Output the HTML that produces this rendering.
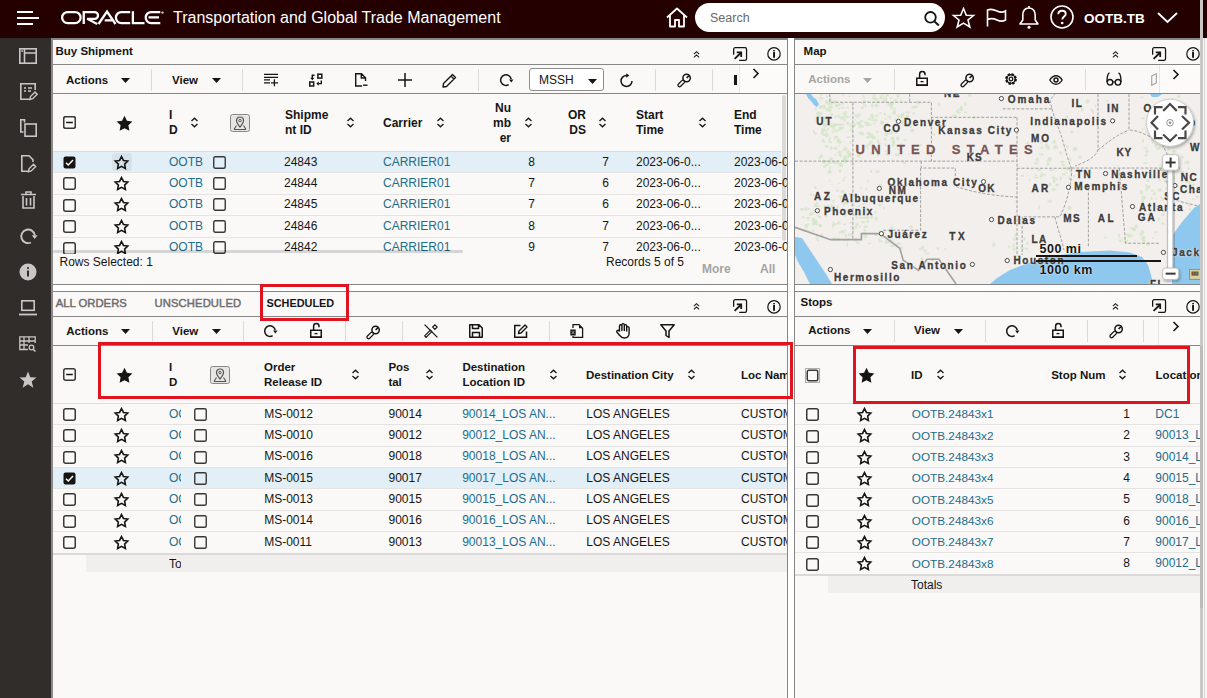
<!DOCTYPE html><html><head><meta charset="utf-8"><style>
html,body{margin:0;padding:0;}
body{width:1207px;height:698px;overflow:hidden;position:relative;background:#ffffff;font-family:"Liberation Sans", sans-serif;}
.t{position:absolute;white-space:nowrap;}
.r{position:absolute;}
.s{position:absolute;overflow:visible;}
</style></head><body>
<div class="r" style="left:0px;top:0px;width:1207px;height:38px;background:#250000;"></div>
<div class="r" style="left:17px;top:11px;width:16px;height:2px;background:#fff;"></div>
<div class="r" style="left:17px;top:17px;width:22px;height:2px;background:#fff;"></div>
<div class="r" style="left:17px;top:23px;width:16px;height:2px;background:#fff;"></div>
<svg class="s" style="left:58px;top:8px;" width="110" height="20" viewBox="0 0 110 20"><g fill="none" stroke="#fff" stroke-width="2.3">
<rect x="4.1" y="4.05" width="18.5" height="11" rx="5.5"/>
<path d="M25.75 16 V4.05 H36.6 A3.4 3.4 0 0 1 36.6 10.85 H29.2 L39.2 16" stroke-linejoin="miter"/>
<path d="M40.5 16 L49 3.5 L57.5 16 M46.7 12.3 H54"/>
<path d="M72.2 4.05 H63.4 A5.5 5.5 0 0 0 63.4 15.05 H72.2"/>
<path d="M74.9 3.2 V15.05 H86.5"/>
<path d="M102.3 4.05 H93.2 A5.5 5.5 0 0 0 93.2 15.05 H102.3 M90.5 9.4 H101"/>
</g><circle cx="104.5" cy="4.6" r="1.2" fill="#ccc"/></svg>
<div class="t" style="left:173px;top:10.26px;font-size:16px;line-height:16px;font-weight:400;color:#fff;">Transportation and Global Trade Management</div>
<svg class="s" style="left:665px;top:7px;" width="24" height="21" viewBox="0 0 24 21"><path d="M2 10.5 L12 1.5 L22 10.5 M5 8 V19.5 H10 V13 H14 V19.5 H19 V8" stroke="#fff" stroke-width="1.8" fill="none" stroke-linejoin="round"/></svg>
<div class="r" style="left:695px;top:3px;width:250px;height:29px;background:#fff;border-radius:15px;"></div>
<div class="t" style="left:710px;top:12.32px;font-size:12.5px;line-height:12.5px;font-weight:400;color:#6b6967;">Search</div>
<svg class="s" style="left:924px;top:11px;" width="16" height="15" viewBox="0 0 16 15"><circle cx="6.5" cy="6.3" r="5.3" stroke="#161513" stroke-width="1.8" fill="none"/><path d="M10.3 10.2 L14.8 14.5" stroke="#161513" stroke-width="2" /></svg>
<svg class="s" style="left:952px;top:7px;" width="23" height="21" viewBox="0 0 23 21"><polygon points="11.5,1.5 14.3,8.2 21.5,8.5 16,13 17.8,20 11.5,16.1 5.2,20 7,13 1.5,8.5 8.7,8.2" fill="none" stroke="#fff" stroke-width="1.6" stroke-linejoin="miter"/></svg>
<svg class="s" style="left:986px;top:8px;" width="21" height="19" viewBox="0 0 21 19"><path d="M1.5 18.5 V2 C5 0.5 8 1.5 11 3 C14 4.5 17 4.5 19.5 3 V12 C17 13.5 14 13.5 11 12 C8 10.5 5 10 1.5 11.5" stroke="#fff" stroke-width="1.6" fill="none"/></svg>
<svg class="s" style="left:1018px;top:5px;" width="22" height="24" viewBox="0 0 22 24"><path d="M11 3 C6.5 3 4.8 6.5 4.8 10.5 V15 L2 19 H20 L17.2 15 V10.5 C17.2 6.5 15.5 3 11 3 Z M11 1 V3" stroke="#fff" stroke-width="1.6" fill="none" stroke-linejoin="round"/><circle cx="11" cy="22.3" r="1.5" fill="#fff"/></svg>
<svg class="s" style="left:1050px;top:5px;" width="24" height="24" viewBox="0 0 24 24"><circle cx="12" cy="12" r="11" stroke="#fff" stroke-width="1.6" fill="none"/><path d="M8.3 9.3 C8.3 6.8 10 5.7 12 5.7 C14.2 5.7 15.7 7 15.7 8.9 C15.7 11.5 12.3 11.7 12.3 14.5" stroke="#fff" stroke-width="1.9" fill="none"/><circle cx="12.2" cy="18" r="1.3" fill="#fff"/></svg>
<div class="t" style="left:1084px;top:11.87px;font-size:13.5px;line-height:13.5px;font-weight:700;color:#fff;">OOTB.TB</div>
<svg class="s" style="left:1157px;top:12px;" width="21" height="11" viewBox="0 0 21 11"><path d="M1 1 L10.5 10 L20 1" stroke="#fff" stroke-width="1.8" fill="none"/></svg>
<div class="r" style="left:0px;top:38px;width:51px;height:660px;background:#312d2a;"></div>
<div class="r" style="left:51px;top:38px;width:2px;height:660px;background:#8c8a88;"></div>
<svg class="s" style="left:19px;top:48px;" width="18" height="16" viewBox="0 0 18 16"><rect x="0.8" y="0.8" width="16.4" height="14.4" fill="none" stroke="#c9c7c5" stroke-width="1.6"/><path d="M5.5 0.8 V15.2 M5.5 5 H17.2" stroke="#c9c7c5" stroke-width="1.6"/><circle cx="3.1" cy="3" r="0.9" fill="#c9c7c5"/></svg>
<svg class="s" style="left:20px;top:83px;" width="18" height="18" viewBox="0 0 18 18"><path d="M10 16.2 H0.8 V0.8 H15.2 V7" stroke="#c9c7c5" stroke-width="1.6" fill="none"/><path d="M4 5 H6 M8 5 H12 M4 8 H6 M8 8 H11" stroke="#c9c7c5" stroke-width="1.6"/><path d="M10 16.5 L10.5 13.5 L15 9 L17.2 11.2 L12.7 15.7 Z" stroke="#c9c7c5" stroke-width="1.4" fill="none"/></svg>
<svg class="s" style="left:20px;top:119px;" width="17" height="18" viewBox="0 0 17 18"><path d="M4.5 3.5 V0.8 H0.8 V13 H3.5" stroke="#c9c7c5" stroke-width="1.6" fill="none"/><rect x="5" y="5" width="11.2" height="12.2" stroke="#c9c7c5" stroke-width="1.6" fill="none"/></svg>
<svg class="s" style="left:21px;top:155px;" width="17" height="18" viewBox="0 0 17 18"><path d="M7 16.2 H0.8 V0.8 H8 L12 4.8 V7" stroke="#c9c7c5" stroke-width="1.6" fill="none"/><path d="M7.5 16.8 L8 13.8 L12.5 9.3 L14.7 11.5 L10.2 16 Z" stroke="#c9c7c5" stroke-width="1.4" fill="none"/></svg>
<svg class="s" style="left:21px;top:191px;" width="15" height="18" viewBox="0 0 15 18"><path d="M0 3.5 H15 M5 3.5 V1 H10 V3.5 M2 5 V17 H13 V5 M5.5 7 V14.5 M9.5 7 V14.5" stroke="#c9c7c5" stroke-width="1.6" fill="none"/></svg>
<svg class="s" style="left:20px;top:228px;" width="18" height="17" viewBox="0 0 18 17"><path d="M10.9 14.5 A6.8 6.8 0 1 1 14.8 7.2" stroke="#c9c7c5" stroke-width="1.9" fill="none"/><path d="M11.8 7.2 H17.6 L14.7 11 Z" fill="#c9c7c5"/></svg>
<svg class="s" style="left:19px;top:263px;" width="18" height="18" viewBox="0 0 18 18"><circle cx="9" cy="9" r="8.5" fill="#c9c7c5"/><rect x="8" y="7.5" width="2" height="6" fill="#312d2a"/><circle cx="9" cy="5" r="1.1" fill="#312d2a"/></svg>
<svg class="s" style="left:19px;top:300px;" width="18" height="16" viewBox="0 0 18 16"><rect x="2.8" y="0.8" width="12.4" height="9.5" fill="none" stroke="#c9c7c5" stroke-width="1.6"/><path d="M0 14.5 H18" stroke="#c9c7c5" stroke-width="1.8"/></svg>
<svg class="s" style="left:19px;top:336px;" width="18" height="16" viewBox="0 0 18 16"><path d="M9 13.5 H0.8 V0.8 H16.2 V7 M0.8 5 H16 M0.8 9 H9 M5 0.8 V13.5 M10 0.8 V7" stroke="#c9c7c5" stroke-width="1.3" fill="none"/><circle cx="12.5" cy="11.5" r="2.3" stroke="#c9c7c5" stroke-width="1.3" fill="none"/><path d="M14.2 13.2 L16.5 15.5" stroke="#c9c7c5" stroke-width="1.5"/></svg>
<svg class="s" style="left:19px;top:371px;" width="18" height="18" viewBox="0 0 18 18"><polygon points="9,0.5 11.3,6.3 17.5,6.6 12.7,10.5 14.3,16.8 9,13.3 3.7,16.8 5.3,10.5 0.5,6.6 6.7,6.3" fill="#c9c7c5"/></svg>
<div class="r" style="left:53px;top:38px;width:735px;height:2px;background:#868686;"></div>
<div class="r" style="left:53px;top:40px;width:734px;height:244px;background:#faf9f8;"></div>
<div class="r" style="left:787px;top:38px;width:1px;height:247px;background:#868686;"></div>
<div class="r" style="left:53px;top:63.5px;width:734px;height:1.5px;background:#868686;"></div>
<div class="r" style="left:53px;top:93px;width:734px;height:1.2px;background:#868686;"></div>
<div class="t" style="left:55.5px;top:45.97px;font-size:11.5px;line-height:11.5px;font-weight:700;color:#161513;">Buy Shipment</div>
<svg class="s" style="left:693px;top:50.5px;" width="7" height="7" viewBox="0 0 7 7"><path d="M0.9 3.2 L3.5 0.7 L6.1 3.2 M0.9 6.4 L3.5 3.9 L6.1 6.4" stroke="#161513" stroke-width="1.05" fill="none"/></svg>
<svg class="s" style="left:733px;top:47px;" width="14" height="14" viewBox="0 0 14 14"><path d="M0.65 7.7 V2.2 A1.55 1.55 0 0 1 2.2 0.65 H12 A1.55 1.55 0 0 1 13.55 2.2 V11.8 A1.55 1.55 0 0 1 12 13.35 H6.2" stroke="#161513" stroke-width="1.3" fill="none"/><path d="M1.6 11.9 L8.2 5.5" stroke="#161513" stroke-width="1.8"/><path d="M3.8 5.4 H8.2 V10" stroke="#161513" stroke-width="1.8" fill="none"/></svg>
<svg class="s" style="left:767px;top:46px;" width="15" height="15" viewBox="0 0 15 15"><circle cx="7" cy="7.9" r="6.2" stroke="#161513" stroke-width="1.2" fill="none"/><rect x="6.1" y="6" width="1.9" height="5.8" fill="#161513"/><rect x="6.1" y="4.1" width="1.9" height="1.2" fill="#161513"/></svg>
<div class="t" style="left:66px;top:74.77px;font-size:11.5px;line-height:11.5px;font-weight:700;color:#161513;">Actions</div>
<svg class="s" style="left:121px;top:78px;" width="9" height="5" viewBox="0 0 9 5"><path d="M0 0 H9 L4.5 5 Z" fill="#161513"/></svg>
<div class="r" style="left:151px;top:69px;width:1px;height:22px;background:#dcdad8;"></div>
<div class="t" style="left:172px;top:74.77px;font-size:11.5px;line-height:11.5px;font-weight:700;color:#161513;">View</div>
<svg class="s" style="left:212px;top:78px;" width="9" height="5" viewBox="0 0 9 5"><path d="M0 0 H9 L4.5 5 Z" fill="#161513"/></svg>
<div class="r" style="left:242px;top:69px;width:1px;height:22px;background:#dcdad8;"></div>
<svg class="s" style="left:264px;top:73px;" width="15" height="14" viewBox="0 0 15 14"><path d="M0 1.4 H14 M0 4.3 H14 M0 6.9 H6 M0 9.8 H6 M7 9.8 H14 M10.4 6.3 V13.3" stroke="#161513" stroke-width="1.3"/></svg>
<svg class="s" style="left:309px;top:73px;" width="14" height="14" viewBox="0 0 14 14"><rect x="8.9" y="1.2" width="3.9" height="3.9" fill="none" stroke="#161513" stroke-width="1.5"/><rect x="0.75" y="9" width="3.9" height="4" fill="none" stroke="#161513" stroke-width="1.5"/><path d="M5.5 2.2 H3.3 V5.2" stroke="#161513" stroke-width="1.4" fill="none"/><path d="M1.2 4.8 H5.4 L3.3 7.3 Z" fill="#161513"/><path d="M12.3 7.6 V10.6 H9.5" stroke="#161513" stroke-width="1.4" fill="none"/><path d="M9.8 8.4 V12.8 L7.3 10.6 Z" fill="#161513"/></svg>
<svg class="s" style="left:355px;top:73px;" width="13" height="14" viewBox="0 0 13 14"><path d="M7 13 H0.7 V0.7 H6.5 L10.5 4.7 V8 M6.3 0.7 V5 H10.5" stroke="#161513" stroke-width="1.4" fill="none"/><path d="M8 12.2 H12.5" stroke="#161513" stroke-width="1.4"/></svg>
<svg class="s" style="left:398px;top:73px;" width="14" height="14" viewBox="0 0 14 14"><path d="M7 0 V14 M0 7 H14" stroke="#161513" stroke-width="1.5"/></svg>
<svg class="s" style="left:442px;top:73px;" width="15" height="15" viewBox="0 0 15 15"><path d="M1 14 L1.5 10.5 L10.5 1.5 L13.5 4.5 L4.5 13.5 Z M9 3 L12 6" stroke="#161513" stroke-width="1.4" fill="none" stroke-linejoin="round"/></svg>
<div class="r" style="left:478px;top:69px;width:1px;height:22px;background:#dcdad8;"></div>
<svg class="s" style="left:500px;top:74px;" width="14" height="13" viewBox="0 0 14 13"><path d="M8.65 10.7 A5.3 5.3 0 1 1 11.2 5.2" stroke="#161513" stroke-width="1.5" fill="none"/><path d="M9.1 5.4 H13.5 L11.3 8.4 Z" fill="#161513"/></svg>
<div class="r" style="left:529px;top:68px;width:75px;height:23px;background:#fff;border:1px solid #8f8d8b;border-radius:3px;box-sizing:border-box;"></div>
<div class="t" style="left:539px;top:74.34px;font-size:12px;line-height:12px;font-weight:400;color:#161513;">MSSH</div>
<svg class="s" style="left:587.5px;top:78.5px;" width="9" height="5" viewBox="0 0 9 5"><path d="M0 0 H9 L4.5 5 Z" fill="#161513"/></svg>
<svg class="s" style="left:619px;top:73px;" width="15" height="15" viewBox="0 0 15 15"><path d="M7.5 2.5 A5.5 5.5 0 1 0 13 8" stroke="#161513" stroke-width="1.5" fill="none"/><path d="M7.2 0.2 L10.4 2.5 L7.2 4.8 Z" fill="#161513"/></svg>
<div class="r" style="left:655px;top:69px;width:1px;height:22px;background:#dcdad8;"></div>
<svg class="s" style="left:677px;top:73px;" width="15" height="14" viewBox="0 0 15 14"><circle cx="9.6" cy="5" r="3.7" stroke="#161513" stroke-width="1.5" fill="none"/><path d="M9.6 5 L12 2.6" stroke="#161513" stroke-width="1.6"/><g transform="translate(7.1 7.6) rotate(45)"><rect x="-1.6" y="0" width="3.2" height="8" rx="1.6" fill="none" stroke="#161513" stroke-width="1.3"/></g></svg>
<div class="r" style="left:712px;top:69px;width:1px;height:22px;background:#dcdad8;"></div>
<div class="r" style="left:734px;top:75px;width:3px;height:10px;background:#161513;"></div>
<div class="r" style="left:739px;top:65px;width:48px;height:28px;background:#fcfbfa;"></div>
<div class="r" style="left:739px;top:65px;width:1px;height:28px;background:#e8e6e4;"></div>
<svg class="s" style="left:752px;top:68px;" width="8" height="11" viewBox="0 0 8 11"><path d="M1.5 1 L6 5.5 L1.5 10" stroke="#161513" stroke-width="1.6" fill="none"/></svg>
<svg class="s" style="left:63px;top:116px;" width="13" height="13" viewBox="0 0 13 13"><rect x="0.75" y="0.75" width="11.5" height="11.5" rx="2" fill="none" stroke="#3a3836" stroke-width="1.5"/></svg>
<svg class="s" style="left:63px;top:116px;" width="13" height="13" viewBox="0 0 13 13"><rect x="0.75" y="0.75" width="11.5" height="11.5" rx="2" fill="#faf9f8" stroke="#3a3836" stroke-width="1.5"/><path d="M3.2 6.5 H9.8" stroke="#161513" stroke-width="1.5"/></svg>
<svg class="s" style="left:116.5px;top:115.5px;" width="15" height="15" viewBox="0 0 15 15"><polygon points="7.50,-0.20 9.91,4.78 15.39,5.54 11.40,9.37 12.38,14.81 7.50,12.20 2.62,14.81 3.60,9.37 -0.39,5.54 5.09,4.78" fill="#161513"/></svg>
<div class="t" style="left:169px;top:109.34px;font-size:12px;line-height:12px;font-weight:700;color:#161513;">I</div>
<div class="t" style="left:169px;top:124.34px;font-size:12px;line-height:12px;font-weight:700;color:#161513;">D</div>
<svg class="s" style="left:190px;top:117px;" width="9" height="11" viewBox="0 0 9 11"><path d="M1.5 4 L4.5 1.2 L7.5 4 M1.5 7 L4.5 9.8 L7.5 7" stroke="#161513" stroke-width="1.3" fill="none"/></svg>
<svg class="s" style="left:230px;top:114px;" width="20" height="18" viewBox="0 0 20 18"><rect x="0.5" y="0.5" width="19" height="17" rx="2" fill="#e8e6e4" stroke="#8a8886"/><path d="M10 13 C7 9.5 6.5 8 6.5 6.5 A3.5 3.5 0 0 1 13.5 6.5 C13.5 8 13 9.5 10 13 Z" fill="none" stroke="#555" stroke-width="1.2"/><circle cx="10" cy="6.6" r="1.2" fill="none" stroke="#555" stroke-width="1"/><path d="M4 15.5 L6.5 11.5 M16 15.5 L13.5 11.5 M4 15.5 H16" stroke="#555" stroke-width="1.1" fill="none"/></svg>
<div class="t" style="left:285px;top:109.34px;font-size:12px;line-height:12px;font-weight:700;color:#161513;">Shipme</div>
<div class="t" style="left:285px;top:124.34px;font-size:12px;line-height:12px;font-weight:700;color:#161513;">nt ID</div>
<svg class="s" style="left:346px;top:117px;" width="9" height="11" viewBox="0 0 9 11"><path d="M1.5 4 L4.5 1.2 L7.5 4 M1.5 7 L4.5 9.8 L7.5 7" stroke="#161513" stroke-width="1.3" fill="none"/></svg>
<div class="t" style="left:383px;top:117.34px;font-size:12px;line-height:12px;font-weight:700;color:#161513;">Carrier</div>
<svg class="s" style="left:436px;top:117px;" width="9" height="11" viewBox="0 0 9 11"><path d="M1.5 4 L4.5 1.2 L7.5 4 M1.5 7 L4.5 9.8 L7.5 7" stroke="#161513" stroke-width="1.3" fill="none"/></svg>
<div class="t" style="right:696px;top:101.84px;font-size:12px;line-height:12px;font-weight:700;color:#161513;">Nu</div>
<div class="t" style="right:696px;top:117.34px;font-size:12px;line-height:12px;font-weight:700;color:#161513;">mb</div>
<div class="t" style="right:696px;top:132.34px;font-size:12px;line-height:12px;font-weight:700;color:#161513;">er</div>
<svg class="s" style="left:524px;top:117px;" width="9" height="11" viewBox="0 0 9 11"><path d="M1.5 4 L4.5 1.2 L7.5 4 M1.5 7 L4.5 9.8 L7.5 7" stroke="#161513" stroke-width="1.3" fill="none"/></svg>
<div class="t" style="right:621px;top:109.34px;font-size:12px;line-height:12px;font-weight:700;color:#161513;">OR</div>
<div class="t" style="right:621px;top:124.34px;font-size:12px;line-height:12px;font-weight:700;color:#161513;">DS</div>
<svg class="s" style="left:598px;top:117px;" width="9" height="11" viewBox="0 0 9 11"><path d="M1.5 4 L4.5 1.2 L7.5 4 M1.5 7 L4.5 9.8 L7.5 7" stroke="#161513" stroke-width="1.3" fill="none"/></svg>
<div class="t" style="left:636px;top:109.34px;font-size:12px;line-height:12px;font-weight:700;color:#161513;">Start</div>
<div class="t" style="left:636px;top:124.34px;font-size:12px;line-height:12px;font-weight:700;color:#161513;">Time</div>
<svg class="s" style="left:698px;top:117px;" width="9" height="11" viewBox="0 0 9 11"><path d="M1.5 4 L4.5 1.2 L7.5 4 M1.5 7 L4.5 9.8 L7.5 7" stroke="#161513" stroke-width="1.3" fill="none"/></svg>
<div class="t" style="left:734px;top:109.34px;font-size:12px;line-height:12px;font-weight:700;color:#161513;">End</div>
<div class="t" style="left:734px;top:124.34px;font-size:12px;line-height:12px;font-weight:700;color:#161513;">Time</div>
<div class="r" style="left:53px;top:150.5px;width:728px;height:1px;background:#dedcda;"></div>
<div class="r" style="left:53px;top:151.5px;width:728px;height:21.0px;background:#e3eff6;"></div>
<div class="r" style="left:112px;top:153px;width:20px;height:18px;background:#d7e3ea;border-radius:3px;"></div>
<div class="r" style="left:53px;top:172.0px;width:728px;height:1px;background:#e6e4e2;"></div>
<svg class="s" style="left:63px;top:156.0px;" width="13" height="13" viewBox="0 0 13 13"><rect x="0.5" y="0.5" width="12" height="12" rx="2" fill="#161513"/><path d="M3 6.8 L5.3 9 L10 4" stroke="#fff" stroke-width="1.5" fill="none"/></svg>
<svg class="s" style="left:114.2px;top:154.5px;" width="15" height="15" viewBox="0 0 15 15"><polygon points="7.50,1.50 9.44,5.43 13.78,6.06 10.64,9.12 11.38,13.44 7.50,11.40 3.62,13.44 4.36,9.12 1.22,6.06 5.56,5.43" fill="none" stroke="#161513" stroke-width="1.6" stroke-linejoin="miter"/></svg>
<div class="t" style="left:169px;top:155.94px;font-size:12px;line-height:12px;font-weight:400;color:#1c6d8c;">OOTB</div>
<svg class="s" style="left:213px;top:155.5px;" width="13" height="13" viewBox="0 0 13 13"><rect x="0.75" y="0.75" width="11.5" height="11.5" rx="1.5" fill="none" stroke="#3a3836" stroke-width="1.4"/></svg>
<div class="t" style="left:284px;top:155.94px;font-size:12px;line-height:12px;font-weight:400;color:#161513;">24843</div>
<div class="t" style="left:383px;top:155.94px;font-size:12px;line-height:12px;font-weight:400;color:#1c6d8c;">CARRIER01</div>
<div class="t" style="right:672px;top:155.94px;font-size:12px;line-height:12px;font-weight:400;color:#161513;">8</div>
<div class="t" style="right:598px;top:155.94px;font-size:12px;line-height:12px;font-weight:400;color:#161513;">7</div>
<div class="t" style="left:636px;top:155.94px;font-size:12px;line-height:12px;font-weight:400;color:#161513;">2023-06-0...</div>
<div class="t" style="left:734px;top:155.94px;font-size:12px;line-height:12px;font-weight:400;color:#161513;">2023-06-0</div>
<div class="r" style="left:53px;top:193.5px;width:728px;height:1px;background:#e6e4e2;"></div>
<svg class="s" style="left:63px;top:177.0px;" width="13" height="13" viewBox="0 0 13 13"><rect x="0.75" y="0.75" width="11.5" height="11.5" rx="2" fill="none" stroke="#3a3836" stroke-width="1.5"/></svg>
<svg class="s" style="left:114.2px;top:175.5px;" width="15" height="15" viewBox="0 0 15 15"><polygon points="7.50,1.50 9.44,5.43 13.78,6.06 10.64,9.12 11.38,13.44 7.50,11.40 3.62,13.44 4.36,9.12 1.22,6.06 5.56,5.43" fill="none" stroke="#161513" stroke-width="1.6" stroke-linejoin="miter"/></svg>
<div class="t" style="left:169px;top:176.94px;font-size:12px;line-height:12px;font-weight:400;color:#1c6d8c;">OOTB</div>
<svg class="s" style="left:213px;top:176.5px;" width="13" height="13" viewBox="0 0 13 13"><rect x="0.75" y="0.75" width="11.5" height="11.5" rx="1.5" fill="none" stroke="#3a3836" stroke-width="1.4"/></svg>
<div class="t" style="left:284px;top:176.94px;font-size:12px;line-height:12px;font-weight:400;color:#161513;">24844</div>
<div class="t" style="left:383px;top:176.94px;font-size:12px;line-height:12px;font-weight:400;color:#1c6d8c;">CARRIER01</div>
<div class="t" style="right:672px;top:176.94px;font-size:12px;line-height:12px;font-weight:400;color:#161513;">7</div>
<div class="t" style="right:598px;top:176.94px;font-size:12px;line-height:12px;font-weight:400;color:#161513;">6</div>
<div class="t" style="left:636px;top:176.94px;font-size:12px;line-height:12px;font-weight:400;color:#161513;">2023-06-0...</div>
<div class="t" style="left:734px;top:176.94px;font-size:12px;line-height:12px;font-weight:400;color:#161513;">2023-06-0</div>
<div class="r" style="left:53px;top:215.0px;width:728px;height:1px;background:#e6e4e2;"></div>
<svg class="s" style="left:63px;top:198.5px;" width="13" height="13" viewBox="0 0 13 13"><rect x="0.75" y="0.75" width="11.5" height="11.5" rx="2" fill="none" stroke="#3a3836" stroke-width="1.5"/></svg>
<svg class="s" style="left:114.2px;top:197px;" width="15" height="15" viewBox="0 0 15 15"><polygon points="7.50,1.50 9.44,5.43 13.78,6.06 10.64,9.12 11.38,13.44 7.50,11.40 3.62,13.44 4.36,9.12 1.22,6.06 5.56,5.43" fill="none" stroke="#161513" stroke-width="1.6" stroke-linejoin="miter"/></svg>
<div class="t" style="left:169px;top:198.44px;font-size:12px;line-height:12px;font-weight:400;color:#1c6d8c;">OOTB</div>
<svg class="s" style="left:213px;top:198px;" width="13" height="13" viewBox="0 0 13 13"><rect x="0.75" y="0.75" width="11.5" height="11.5" rx="1.5" fill="none" stroke="#3a3836" stroke-width="1.4"/></svg>
<div class="t" style="left:284px;top:198.44px;font-size:12px;line-height:12px;font-weight:400;color:#161513;">24845</div>
<div class="t" style="left:383px;top:198.44px;font-size:12px;line-height:12px;font-weight:400;color:#1c6d8c;">CARRIER01</div>
<div class="t" style="right:672px;top:198.44px;font-size:12px;line-height:12px;font-weight:400;color:#161513;">7</div>
<div class="t" style="right:598px;top:198.44px;font-size:12px;line-height:12px;font-weight:400;color:#161513;">6</div>
<div class="t" style="left:636px;top:198.44px;font-size:12px;line-height:12px;font-weight:400;color:#161513;">2023-06-0...</div>
<div class="t" style="left:734px;top:198.44px;font-size:12px;line-height:12px;font-weight:400;color:#161513;">2023-06-0</div>
<div class="r" style="left:53px;top:236.5px;width:728px;height:1px;background:#e6e4e2;"></div>
<svg class="s" style="left:63px;top:220.0px;" width="13" height="13" viewBox="0 0 13 13"><rect x="0.75" y="0.75" width="11.5" height="11.5" rx="2" fill="none" stroke="#3a3836" stroke-width="1.5"/></svg>
<svg class="s" style="left:114.2px;top:218.5px;" width="15" height="15" viewBox="0 0 15 15"><polygon points="7.50,1.50 9.44,5.43 13.78,6.06 10.64,9.12 11.38,13.44 7.50,11.40 3.62,13.44 4.36,9.12 1.22,6.06 5.56,5.43" fill="none" stroke="#161513" stroke-width="1.6" stroke-linejoin="miter"/></svg>
<div class="t" style="left:169px;top:219.94px;font-size:12px;line-height:12px;font-weight:400;color:#1c6d8c;">OOTB</div>
<svg class="s" style="left:213px;top:219.5px;" width="13" height="13" viewBox="0 0 13 13"><rect x="0.75" y="0.75" width="11.5" height="11.5" rx="1.5" fill="none" stroke="#3a3836" stroke-width="1.4"/></svg>
<div class="t" style="left:284px;top:219.94px;font-size:12px;line-height:12px;font-weight:400;color:#161513;">24846</div>
<div class="t" style="left:383px;top:219.94px;font-size:12px;line-height:12px;font-weight:400;color:#1c6d8c;">CARRIER01</div>
<div class="t" style="right:672px;top:219.94px;font-size:12px;line-height:12px;font-weight:400;color:#161513;">8</div>
<div class="t" style="right:598px;top:219.94px;font-size:12px;line-height:12px;font-weight:400;color:#161513;">7</div>
<div class="t" style="left:636px;top:219.94px;font-size:12px;line-height:12px;font-weight:400;color:#161513;">2023-06-0...</div>
<div class="t" style="left:734px;top:219.94px;font-size:12px;line-height:12px;font-weight:400;color:#161513;">2023-06-0</div>
<svg class="s" style="left:63px;top:241.5px;" width="13" height="13" viewBox="0 0 13 13"><rect x="0.75" y="0.75" width="11.5" height="11.5" rx="2" fill="none" stroke="#3a3836" stroke-width="1.5"/></svg>
<svg class="s" style="left:114.2px;top:240px;" width="15" height="15" viewBox="0 0 15 15"><polygon points="7.50,1.50 9.44,5.43 13.78,6.06 10.64,9.12 11.38,13.44 7.50,11.40 3.62,13.44 4.36,9.12 1.22,6.06 5.56,5.43" fill="none" stroke="#161513" stroke-width="1.6" stroke-linejoin="miter"/></svg>
<div class="t" style="left:169px;top:241.44px;font-size:12px;line-height:12px;font-weight:400;color:#1c6d8c;">OOTB</div>
<svg class="s" style="left:213px;top:241px;" width="13" height="13" viewBox="0 0 13 13"><rect x="0.75" y="0.75" width="11.5" height="11.5" rx="1.5" fill="none" stroke="#3a3836" stroke-width="1.4"/></svg>
<div class="t" style="left:284px;top:241.44px;font-size:12px;line-height:12px;font-weight:400;color:#161513;">24842</div>
<div class="t" style="left:383px;top:241.44px;font-size:12px;line-height:12px;font-weight:400;color:#1c6d8c;">CARRIER01</div>
<div class="t" style="right:672px;top:241.44px;font-size:12px;line-height:12px;font-weight:400;color:#161513;">9</div>
<div class="t" style="right:598px;top:241.44px;font-size:12px;line-height:12px;font-weight:400;color:#161513;">7</div>
<div class="t" style="left:636px;top:241.44px;font-size:12px;line-height:12px;font-weight:400;color:#161513;">2023-06-0...</div>
<div class="t" style="left:734px;top:241.44px;font-size:12px;line-height:12px;font-weight:400;color:#161513;">2023-06-0</div>
<div class="r" style="left:53px;top:254px;width:734px;height:30px;background:#faf9f8;"></div>
<div class="r" style="left:53px;top:250px;width:410px;height:3px;background:rgba(0,0,0,0.14);border-radius:1.5px;"></div>
<div class="r" style="left:781.5px;top:94.5px;width:4px;height:146px;background:rgba(0,0,0,0.12);border-radius:2px;"></div>
<div class="r" style="left:53px;top:283.8px;width:735px;height:1.2px;background:#868686;"></div>
<div class="t" style="left:59.5px;top:256.34px;font-size:12px;line-height:12px;font-weight:400;color:#161513;">Rows Selected: 1</div>
<div class="t" style="left:606px;top:256.34px;font-size:12px;line-height:12px;font-weight:400;color:#161513;">Records 5 of 5</div>
<div class="t" style="left:702px;top:262.84px;font-size:12px;line-height:12px;font-weight:700;color:#a6a4a2;">More</div>
<div class="t" style="left:760px;top:262.84px;font-size:12px;line-height:12px;font-weight:700;color:#a6a4a2;">All</div>
<div class="r" style="left:53px;top:290.5px;width:735px;height:1.2px;background:#868686;"></div>
<div class="r" style="left:53px;top:291.7px;width:734px;height:406.3px;background:#faf9f8;"></div>
<div class="r" style="left:787px;top:290.5px;width:1px;height:408px;background:#868686;"></div>
<div class="r" style="left:53px;top:315.8px;width:734px;height:1.2px;background:#868686;"></div>
<div class="r" style="left:53px;top:345px;width:734px;height:1.2px;background:#868686;"></div>
<div class="t" style="left:55.7px;top:297.93px;font-size:11.3px;line-height:11.3px;font-weight:400;color:#6f6d6b;-webkit-text-stroke:0.45px #6f6d6b;">ALL ORDERS</div>
<div class="t" style="left:154.5px;top:298.02px;font-size:11.2px;line-height:11.2px;font-weight:400;color:#6f6d6b;-webkit-text-stroke:0.45px #6f6d6b;letter-spacing:0.15px;">UNSCHEDULED</div>
<div class="t" style="left:266.4px;top:298.27px;font-size:10.9px;line-height:10.9px;font-weight:700;color:#161513;">SCHEDULED</div>
<svg class="s" style="left:692.5px;top:302.5px;" width="7" height="7" viewBox="0 0 7 7"><path d="M0.9 3.2 L3.5 0.7 L6.1 3.2 M0.9 6.4 L3.5 3.9 L6.1 6.4" stroke="#161513" stroke-width="1.05" fill="none"/></svg>
<svg class="s" style="left:733px;top:299.3px;" width="14" height="14" viewBox="0 0 14 14"><path d="M0.65 7.7 V2.2 A1.55 1.55 0 0 1 2.2 0.65 H12 A1.55 1.55 0 0 1 13.55 2.2 V11.8 A1.55 1.55 0 0 1 12 13.35 H6.2" stroke="#161513" stroke-width="1.3" fill="none"/><path d="M1.6 11.9 L8.2 5.5" stroke="#161513" stroke-width="1.8"/><path d="M3.8 5.4 H8.2 V10" stroke="#161513" stroke-width="1.8" fill="none"/></svg>
<svg class="s" style="left:767px;top:298.5px;" width="15" height="15" viewBox="0 0 15 15"><circle cx="7" cy="7.9" r="6.2" stroke="#161513" stroke-width="1.2" fill="none"/><rect x="6.1" y="6" width="1.9" height="5.8" fill="#161513"/><rect x="6.1" y="4.1" width="1.9" height="1.2" fill="#161513"/></svg>
<div class="t" style="left:66.3px;top:325.57px;font-size:11.5px;line-height:11.5px;font-weight:700;color:#161513;">Actions</div>
<svg class="s" style="left:121.4px;top:328.5px;" width="9" height="5" viewBox="0 0 9 5"><path d="M0 0 H9 L4.5 5 Z" fill="#161513"/></svg>
<div class="r" style="left:151.5px;top:321px;width:1px;height:20px;background:#dcdad8;"></div>
<div class="t" style="left:172.3px;top:325.57px;font-size:11.5px;line-height:11.5px;font-weight:700;color:#161513;">View</div>
<svg class="s" style="left:212px;top:328.5px;" width="9" height="5" viewBox="0 0 9 5"><path d="M0 0 H9 L4.5 5 Z" fill="#161513"/></svg>
<div class="r" style="left:242.5px;top:321px;width:1px;height:20px;background:#dcdad8;"></div>
<svg class="s" style="left:264px;top:325px;" width="14" height="13" viewBox="0 0 14 13"><path d="M8.65 10.7 A5.3 5.3 0 1 1 11.2 5.2" stroke="#161513" stroke-width="1.5" fill="none"/><path d="M9.1 5.4 H13.5 L11.3 8.4 Z" fill="#161513"/></svg>
<svg class="s" style="left:309.5px;top:322.5px;" width="12" height="15" viewBox="0 0 12 15"><path d="M3.6 7 V3.3 A2.7 2.7 0 0 1 9 3.3 V4.3" stroke="#161513" stroke-width="1.5" fill="none"/><rect x="0.75" y="7.25" width="10.5" height="7" fill="none" stroke="#161513" stroke-width="1.5"/><path d="M0.75 14 H11.25" stroke="#161513" stroke-width="1.2"/><path d="M4.5 10.6 H7.5" stroke="#161513" stroke-width="1.3"/></svg>
<div class="r" style="left:344.5px;top:321px;width:1px;height:20px;background:#dcdad8;"></div>
<svg class="s" style="left:366px;top:324.5px;" width="15" height="14" viewBox="0 0 15 14"><circle cx="9.6" cy="5" r="3.7" stroke="#161513" stroke-width="1.5" fill="none"/><path d="M9.6 5 L12 2.6" stroke="#161513" stroke-width="1.6"/><g transform="translate(7.1 7.6) rotate(45)"><rect x="-1.6" y="0" width="3.2" height="8" rx="1.6" fill="none" stroke="#161513" stroke-width="1.3"/></g></svg>
<div class="r" style="left:401.5px;top:321px;width:1px;height:20px;background:#dcdad8;"></div>
<svg class="s" style="left:424px;top:324px;" width="14" height="14" viewBox="0 0 14 14"><path d="M0.6 0.6 L13.4 13.4" stroke="#161513" stroke-width="1.3"/><path d="M0.7 11.9 L6.4 6.2 L7.8 7.6 L2.1 13.3 Z" stroke="#161513" stroke-width="1.2" fill="none" stroke-linejoin="round"/><path d="M10.9 0.9 L13.1 3.1 L10.9 5.3 L8.7 3.1 Z" stroke="#161513" stroke-width="1.2" fill="none"/></svg>
<svg class="s" style="left:469px;top:324px;" width="14" height="14" viewBox="0 0 14 14"><path d="M0.75 0.75 H10 L13.25 4 V13.25 H0.75 Z M3.5 0.75 V4.5 H9.5 V0.75 M3.5 13.25 V8.5 H10.5 V13.25" stroke="#161513" stroke-width="1.5" fill="none" stroke-linejoin="round"/></svg>
<svg class="s" style="left:514px;top:324px;" width="14" height="14" viewBox="0 0 14 14"><path d="M6.5 1.5 H0.75 V13.25 H12.5 V7.5" stroke="#161513" stroke-width="1.5" fill="none"/><path d="M4.5 9.5 L5 7 L11 1 L13 3 L7 9 Z" stroke="#161513" stroke-width="1.4" fill="none" stroke-linejoin="round"/></svg>
<div class="r" style="left:548.5px;top:321px;width:1px;height:20px;background:#dcdad8;"></div>
<svg class="s" style="left:570px;top:324px;" width="14" height="14" viewBox="0 0 14 14"><path d="M3 4 V0.65 H9 L12.6 4.3 V13.35 H3 V12" stroke="#161513" stroke-width="1.3" fill="none"/><path d="M9 0.65 L12.6 4.3 H9 Z" fill="#161513"/><rect x="0.3" y="5.5" width="5.4" height="6" fill="#161513"/><path d="M1.6 6.9 L4.4 10.1 M4.4 6.9 L1.6 10.1" stroke="#9ab" stroke-width="0.9"/></svg>
<svg class="s" style="left:616px;top:323px;" width="15" height="16" viewBox="0 0 15 16"><path d="M3.5 8.5 V3 A1.2 1.2 0 0 1 5.9 3 V7.5 V1.8 A1.2 1.2 0 0 1 8.3 1.8 V7.5 V2.8 A1.2 1.2 0 0 1 10.7 2.8 V8 V4.8 A1.2 1.2 0 0 1 13.1 4.8 V10 C13.1 13 11.3 15 8.3 15 C6 15 5 14 3.5 12.2 L1 9.3 A1.2 1.2 0 0 1 3 7.8 L3.5 8.5" stroke="#161513" stroke-width="1.4" fill="none" stroke-linejoin="round"/></svg>
<svg class="s" style="left:660px;top:324px;" width="15" height="14" viewBox="0 0 15 14"><path d="M0.8 0.8 H14.2 L9 7 V13.5 L6 11.5 V7 Z" stroke="#161513" stroke-width="1.5" fill="none" stroke-linejoin="round"/></svg>
<svg class="s" style="left:63px;top:368px;" width="13" height="13" viewBox="0 0 13 13"><rect x="0.75" y="0.75" width="11.5" height="11.5" rx="2" fill="#faf9f8" stroke="#3a3836" stroke-width="1.5"/><path d="M3.2 6.5 H9.8" stroke="#161513" stroke-width="1.5"/></svg>
<svg class="s" style="left:117px;top:367.5px;" width="15" height="15" viewBox="0 0 15 15"><polygon points="7.50,-0.20 9.91,4.78 15.39,5.54 11.40,9.37 12.38,14.81 7.50,12.20 2.62,14.81 3.60,9.37 -0.39,5.54 5.09,4.78" fill="#161513"/></svg>
<div class="t" style="left:169px;top:361.77px;font-size:11.5px;line-height:11.5px;font-weight:700;color:#161513;">I</div>
<div class="t" style="left:169px;top:376.77px;font-size:11.5px;line-height:11.5px;font-weight:700;color:#161513;">D</div>
<svg class="s" style="left:210px;top:366px;" width="20" height="18" viewBox="0 0 20 18"><rect x="0.5" y="0.5" width="19" height="17" rx="2" fill="#e8e6e4" stroke="#8a8886"/><path d="M10 13 C7 9.5 6.5 8 6.5 6.5 A3.5 3.5 0 0 1 13.5 6.5 C13.5 8 13 9.5 10 13 Z" fill="none" stroke="#555" stroke-width="1.2"/><circle cx="10" cy="6.6" r="1.2" fill="none" stroke="#555" stroke-width="1"/><path d="M4 15.5 L6.5 11.5 M16 15.5 L13.5 11.5 M4 15.5 H16" stroke="#555" stroke-width="1.1" fill="none"/></svg>
<div class="t" style="left:264px;top:361.77px;font-size:11.5px;line-height:11.5px;font-weight:700;color:#161513;">Order</div>
<div class="t" style="left:264px;top:376.77px;font-size:11.5px;line-height:11.5px;font-weight:700;color:#161513;">Release ID</div>
<svg class="s" style="left:351px;top:369px;" width="9" height="11" viewBox="0 0 9 11"><path d="M1.5 4 L4.5 1.2 L7.5 4 M1.5 7 L4.5 9.8 L7.5 7" stroke="#161513" stroke-width="1.3" fill="none"/></svg>
<div class="t" style="left:388.4px;top:361.77px;font-size:11.5px;line-height:11.5px;font-weight:700;color:#161513;">Pos</div>
<div class="t" style="left:388.4px;top:376.77px;font-size:11.5px;line-height:11.5px;font-weight:700;color:#161513;">tal</div>
<svg class="s" style="left:425px;top:369px;" width="9" height="11" viewBox="0 0 9 11"><path d="M1.5 4 L4.5 1.2 L7.5 4 M1.5 7 L4.5 9.8 L7.5 7" stroke="#161513" stroke-width="1.3" fill="none"/></svg>
<div class="t" style="left:462.4px;top:361.77px;font-size:11.5px;line-height:11.5px;font-weight:700;color:#161513;">Destination</div>
<div class="t" style="left:462.4px;top:376.77px;font-size:11.5px;line-height:11.5px;font-weight:700;color:#161513;">Location ID</div>
<svg class="s" style="left:549px;top:369px;" width="9" height="11" viewBox="0 0 9 11"><path d="M1.5 4 L4.5 1.2 L7.5 4 M1.5 7 L4.5 9.8 L7.5 7" stroke="#161513" stroke-width="1.3" fill="none"/></svg>
<div class="t" style="left:586px;top:369.77px;font-size:11.5px;line-height:11.5px;font-weight:700;color:#161513;">Destination City</div>
<svg class="s" style="left:687px;top:369px;" width="9" height="11" viewBox="0 0 9 11"><path d="M1.5 4 L4.5 1.2 L7.5 4 M1.5 7 L4.5 9.8 L7.5 7" stroke="#161513" stroke-width="1.3" fill="none"/></svg>
<div style="position:absolute;left:741px;top:360px;width:46px;height:30px;overflow:hidden;">
<div class="t" style="left:0px;top:9.77px;font-size:11.5px;line-height:11.5px;font-weight:700;color:#161513;">Loc Name</div>
</div>
<div class="r" style="left:53px;top:402.9px;width:734px;height:1px;background:#e0dedc;"></div>
<div class="r" style="left:53px;top:424.1px;width:734px;height:1px;background:#e6e4e2;"></div>
<svg class="s" style="left:63px;top:408.09999999999997px;" width="13" height="13" viewBox="0 0 13 13"><rect x="0.75" y="0.75" width="11.5" height="11.5" rx="2" fill="none" stroke="#3a3836" stroke-width="1.5"/></svg>
<svg class="s" style="left:114.2px;top:406.7px;" width="15" height="15" viewBox="0 0 15 15"><polygon points="7.50,1.50 9.44,5.43 13.78,6.06 10.64,9.12 11.38,13.44 7.50,11.40 3.62,13.44 4.36,9.12 1.22,6.06 5.56,5.43" fill="none" stroke="#161513" stroke-width="1.6" stroke-linejoin="miter"/></svg>
<div style="position:absolute;left:169px;top:403.4px;width:12px;height:20px;overflow:hidden;">
<div class="t" style="left:0px;top:4.24px;font-size:12px;line-height:12px;font-weight:400;color:#1c6d8c;">OOTB</div>
</div>
<svg class="s" style="left:194px;top:407.9px;" width="13" height="13" viewBox="0 0 13 13"><rect x="0.75" y="0.75" width="11.5" height="11.5" rx="1.5" fill="none" stroke="#3a3836" stroke-width="1.4"/></svg>
<div class="t" style="left:264.2px;top:407.64px;font-size:12px;line-height:12px;font-weight:400;color:#161513;">MS-0012</div>
<div class="t" style="left:388.5px;top:407.64px;font-size:12px;line-height:12px;font-weight:400;color:#161513;">90014</div>
<div class="t" style="left:462.2px;top:407.64px;font-size:12px;line-height:12px;font-weight:400;color:#1c6d8c;">90014_LOS AN...</div>
<div class="t" style="left:586.3px;top:407.64px;font-size:12px;line-height:12px;font-weight:400;color:#161513;">LOS ANGELES</div>
<div style="position:absolute;left:741px;top:403.4px;width:46px;height:20px;overflow:hidden;">
<div class="t" style="left:0px;top:4.24px;font-size:12px;line-height:12px;font-weight:400;color:#161513;">CUSTOMER</div>
</div>
<div class="r" style="left:53px;top:445.6px;width:734px;height:1px;background:#e6e4e2;"></div>
<svg class="s" style="left:63px;top:429.3px;" width="13" height="13" viewBox="0 0 13 13"><rect x="0.75" y="0.75" width="11.5" height="11.5" rx="2" fill="none" stroke="#3a3836" stroke-width="1.5"/></svg>
<svg class="s" style="left:114.2px;top:427.90000000000003px;" width="15" height="15" viewBox="0 0 15 15"><polygon points="7.50,1.50 9.44,5.43 13.78,6.06 10.64,9.12 11.38,13.44 7.50,11.40 3.62,13.44 4.36,9.12 1.22,6.06 5.56,5.43" fill="none" stroke="#161513" stroke-width="1.6" stroke-linejoin="miter"/></svg>
<div style="position:absolute;left:169px;top:424.6px;width:12px;height:20px;overflow:hidden;">
<div class="t" style="left:0px;top:4.24px;font-size:12px;line-height:12px;font-weight:400;color:#1c6d8c;">OOTB</div>
</div>
<svg class="s" style="left:194px;top:429.1px;" width="13" height="13" viewBox="0 0 13 13"><rect x="0.75" y="0.75" width="11.5" height="11.5" rx="1.5" fill="none" stroke="#3a3836" stroke-width="1.4"/></svg>
<div class="t" style="left:264.2px;top:428.84px;font-size:12px;line-height:12px;font-weight:400;color:#161513;">MS-0010</div>
<div class="t" style="left:388.5px;top:428.84px;font-size:12px;line-height:12px;font-weight:400;color:#161513;">90012</div>
<div class="t" style="left:462.2px;top:428.84px;font-size:12px;line-height:12px;font-weight:400;color:#1c6d8c;">90012_LOS AN...</div>
<div class="t" style="left:586.3px;top:428.84px;font-size:12px;line-height:12px;font-weight:400;color:#161513;">LOS ANGELES</div>
<div style="position:absolute;left:741px;top:424.6px;width:46px;height:20px;overflow:hidden;">
<div class="t" style="left:0px;top:4.24px;font-size:12px;line-height:12px;font-weight:400;color:#161513;">CUSTOMER</div>
</div>
<div class="r" style="left:53px;top:466.8px;width:734px;height:1px;background:#e6e4e2;"></div>
<svg class="s" style="left:63px;top:450.8px;" width="13" height="13" viewBox="0 0 13 13"><rect x="0.75" y="0.75" width="11.5" height="11.5" rx="2" fill="none" stroke="#3a3836" stroke-width="1.5"/></svg>
<svg class="s" style="left:114.2px;top:449.40000000000003px;" width="15" height="15" viewBox="0 0 15 15"><polygon points="7.50,1.50 9.44,5.43 13.78,6.06 10.64,9.12 11.38,13.44 7.50,11.40 3.62,13.44 4.36,9.12 1.22,6.06 5.56,5.43" fill="none" stroke="#161513" stroke-width="1.6" stroke-linejoin="miter"/></svg>
<div style="position:absolute;left:169px;top:446.1px;width:12px;height:20px;overflow:hidden;">
<div class="t" style="left:0px;top:4.24px;font-size:12px;line-height:12px;font-weight:400;color:#1c6d8c;">OOTB</div>
</div>
<svg class="s" style="left:194px;top:450.6px;" width="13" height="13" viewBox="0 0 13 13"><rect x="0.75" y="0.75" width="11.5" height="11.5" rx="1.5" fill="none" stroke="#3a3836" stroke-width="1.4"/></svg>
<div class="t" style="left:264.2px;top:450.34px;font-size:12px;line-height:12px;font-weight:400;color:#161513;">MS-0016</div>
<div class="t" style="left:388.5px;top:450.34px;font-size:12px;line-height:12px;font-weight:400;color:#161513;">90018</div>
<div class="t" style="left:462.2px;top:450.34px;font-size:12px;line-height:12px;font-weight:400;color:#1c6d8c;">90018_LOS AN...</div>
<div class="t" style="left:586.3px;top:450.34px;font-size:12px;line-height:12px;font-weight:400;color:#161513;">LOS ANGELES</div>
<div style="position:absolute;left:741px;top:446.1px;width:46px;height:20px;overflow:hidden;">
<div class="t" style="left:0px;top:4.24px;font-size:12px;line-height:12px;font-weight:400;color:#161513;">CUSTOMER</div>
</div>
<div class="r" style="left:53px;top:467.8px;width:734px;height:20.899999999999977px;background:#e3eff6;"></div>
<div class="r" style="left:53px;top:488.2px;width:734px;height:1px;background:#e6e4e2;"></div>
<svg class="s" style="left:63px;top:472.0px;" width="13" height="13" viewBox="0 0 13 13"><rect x="0.5" y="0.5" width="12" height="12" rx="2" fill="#161513"/><path d="M3 6.8 L5.3 9 L10 4" stroke="#fff" stroke-width="1.5" fill="none"/></svg>
<svg class="s" style="left:114.2px;top:470.6px;" width="15" height="15" viewBox="0 0 15 15"><polygon points="7.50,1.50 9.44,5.43 13.78,6.06 10.64,9.12 11.38,13.44 7.50,11.40 3.62,13.44 4.36,9.12 1.22,6.06 5.56,5.43" fill="none" stroke="#161513" stroke-width="1.6" stroke-linejoin="miter"/></svg>
<div style="position:absolute;left:169px;top:467.3px;width:12px;height:20px;overflow:hidden;">
<div class="t" style="left:0px;top:4.24px;font-size:12px;line-height:12px;font-weight:400;color:#1c6d8c;">OOTB</div>
</div>
<svg class="s" style="left:194px;top:471.8px;" width="13" height="13" viewBox="0 0 13 13"><rect x="0.75" y="0.75" width="11.5" height="11.5" rx="1.5" fill="none" stroke="#3a3836" stroke-width="1.4"/></svg>
<div class="t" style="left:264.2px;top:471.54px;font-size:12px;line-height:12px;font-weight:400;color:#161513;">MS-0015</div>
<div class="t" style="left:388.5px;top:471.54px;font-size:12px;line-height:12px;font-weight:400;color:#161513;">90017</div>
<div class="t" style="left:462.2px;top:471.54px;font-size:12px;line-height:12px;font-weight:400;color:#1c6d8c;">90017_LOS AN...</div>
<div class="t" style="left:586.3px;top:471.54px;font-size:12px;line-height:12px;font-weight:400;color:#161513;">LOS ANGELES</div>
<div style="position:absolute;left:741px;top:467.3px;width:46px;height:20px;overflow:hidden;">
<div class="t" style="left:0px;top:4.24px;font-size:12px;line-height:12px;font-weight:400;color:#161513;">CUSTOMER</div>
</div>
<div class="r" style="left:53px;top:509.5px;width:734px;height:1px;background:#e6e4e2;"></div>
<svg class="s" style="left:63px;top:493.4px;" width="13" height="13" viewBox="0 0 13 13"><rect x="0.75" y="0.75" width="11.5" height="11.5" rx="2" fill="none" stroke="#3a3836" stroke-width="1.5"/></svg>
<svg class="s" style="left:114.2px;top:492.0px;" width="15" height="15" viewBox="0 0 15 15"><polygon points="7.50,1.50 9.44,5.43 13.78,6.06 10.64,9.12 11.38,13.44 7.50,11.40 3.62,13.44 4.36,9.12 1.22,6.06 5.56,5.43" fill="none" stroke="#161513" stroke-width="1.6" stroke-linejoin="miter"/></svg>
<div style="position:absolute;left:169px;top:488.7px;width:12px;height:20px;overflow:hidden;">
<div class="t" style="left:0px;top:4.24px;font-size:12px;line-height:12px;font-weight:400;color:#1c6d8c;">OOTB</div>
</div>
<svg class="s" style="left:194px;top:493.2px;" width="13" height="13" viewBox="0 0 13 13"><rect x="0.75" y="0.75" width="11.5" height="11.5" rx="1.5" fill="none" stroke="#3a3836" stroke-width="1.4"/></svg>
<div class="t" style="left:264.2px;top:492.94px;font-size:12px;line-height:12px;font-weight:400;color:#161513;">MS-0013</div>
<div class="t" style="left:388.5px;top:492.94px;font-size:12px;line-height:12px;font-weight:400;color:#161513;">90015</div>
<div class="t" style="left:462.2px;top:492.94px;font-size:12px;line-height:12px;font-weight:400;color:#1c6d8c;">90015_LOS AN...</div>
<div class="t" style="left:586.3px;top:492.94px;font-size:12px;line-height:12px;font-weight:400;color:#161513;">LOS ANGELES</div>
<div style="position:absolute;left:741px;top:488.7px;width:46px;height:20px;overflow:hidden;">
<div class="t" style="left:0px;top:4.24px;font-size:12px;line-height:12px;font-weight:400;color:#161513;">CUSTOMER</div>
</div>
<div class="r" style="left:53px;top:530.9px;width:734px;height:1px;background:#e6e4e2;"></div>
<svg class="s" style="left:63px;top:514.7px;" width="13" height="13" viewBox="0 0 13 13"><rect x="0.75" y="0.75" width="11.5" height="11.5" rx="2" fill="none" stroke="#3a3836" stroke-width="1.5"/></svg>
<svg class="s" style="left:114.2px;top:513.3px;" width="15" height="15" viewBox="0 0 15 15"><polygon points="7.50,1.50 9.44,5.43 13.78,6.06 10.64,9.12 11.38,13.44 7.50,11.40 3.62,13.44 4.36,9.12 1.22,6.06 5.56,5.43" fill="none" stroke="#161513" stroke-width="1.6" stroke-linejoin="miter"/></svg>
<div style="position:absolute;left:169px;top:510.0px;width:12px;height:20px;overflow:hidden;">
<div class="t" style="left:0px;top:4.24px;font-size:12px;line-height:12px;font-weight:400;color:#1c6d8c;">OOTB</div>
</div>
<svg class="s" style="left:194px;top:514.5px;" width="13" height="13" viewBox="0 0 13 13"><rect x="0.75" y="0.75" width="11.5" height="11.5" rx="1.5" fill="none" stroke="#3a3836" stroke-width="1.4"/></svg>
<div class="t" style="left:264.2px;top:514.24px;font-size:12px;line-height:12px;font-weight:400;color:#161513;">MS-0014</div>
<div class="t" style="left:388.5px;top:514.24px;font-size:12px;line-height:12px;font-weight:400;color:#161513;">90016</div>
<div class="t" style="left:462.2px;top:514.24px;font-size:12px;line-height:12px;font-weight:400;color:#1c6d8c;">90016_LOS AN...</div>
<div class="t" style="left:586.3px;top:514.24px;font-size:12px;line-height:12px;font-weight:400;color:#161513;">LOS ANGELES</div>
<div style="position:absolute;left:741px;top:510.0px;width:46px;height:20px;overflow:hidden;">
<div class="t" style="left:0px;top:4.24px;font-size:12px;line-height:12px;font-weight:400;color:#161513;">CUSTOMER</div>
</div>
<svg class="s" style="left:63px;top:536.1px;" width="13" height="13" viewBox="0 0 13 13"><rect x="0.75" y="0.75" width="11.5" height="11.5" rx="2" fill="none" stroke="#3a3836" stroke-width="1.5"/></svg>
<svg class="s" style="left:114.2px;top:534.6999999999999px;" width="15" height="15" viewBox="0 0 15 15"><polygon points="7.50,1.50 9.44,5.43 13.78,6.06 10.64,9.12 11.38,13.44 7.50,11.40 3.62,13.44 4.36,9.12 1.22,6.06 5.56,5.43" fill="none" stroke="#161513" stroke-width="1.6" stroke-linejoin="miter"/></svg>
<div style="position:absolute;left:169px;top:531.4px;width:12px;height:20px;overflow:hidden;">
<div class="t" style="left:0px;top:4.24px;font-size:12px;line-height:12px;font-weight:400;color:#1c6d8c;">OOTB</div>
</div>
<svg class="s" style="left:194px;top:535.9px;" width="13" height="13" viewBox="0 0 13 13"><rect x="0.75" y="0.75" width="11.5" height="11.5" rx="1.5" fill="none" stroke="#3a3836" stroke-width="1.4"/></svg>
<div class="t" style="left:264.2px;top:535.64px;font-size:12px;line-height:12px;font-weight:400;color:#161513;">MS-0011</div>
<div class="t" style="left:388.5px;top:535.64px;font-size:12px;line-height:12px;font-weight:400;color:#161513;">90013</div>
<div class="t" style="left:462.2px;top:535.64px;font-size:12px;line-height:12px;font-weight:400;color:#1c6d8c;">90013_LOS AN...</div>
<div class="t" style="left:586.3px;top:535.64px;font-size:12px;line-height:12px;font-weight:400;color:#161513;">LOS ANGELES</div>
<div style="position:absolute;left:741px;top:531.4px;width:46px;height:20px;overflow:hidden;">
<div class="t" style="left:0px;top:4.24px;font-size:12px;line-height:12px;font-weight:400;color:#161513;">CUSTOMER</div>
</div>
<div class="r" style="left:53px;top:553.2px;width:734px;height:2px;background:#dcdad8;"></div>
<div class="r" style="left:86px;top:555.2px;width:701px;height:16.5px;background:#f0efee;"></div>
<div style="position:absolute;left:169px;top:555px;width:12px;height:17px;overflow:hidden;">
<div class="t" style="left:0px;top:3.04px;font-size:12px;line-height:12px;font-weight:400;color:#161513;">Totals</div>
</div>
<div class="r" style="left:788px;top:38px;width:6px;height:660px;background:#ffffff;"></div>
<div class="r" style="left:794px;top:38px;width:413px;height:2px;background:#868686;"></div>
<div class="r" style="left:794px;top:38px;width:1px;height:247px;background:#868686;"></div>
<div class="r" style="left:795px;top:40px;width:412px;height:244px;background:#faf9f8;"></div>
<div class="r" style="left:795px;top:63.5px;width:412px;height:1.5px;background:#868686;"></div>
<div class="r" style="left:795px;top:93px;width:412px;height:1.2px;background:#868686;"></div>
<div class="t" style="left:803.6px;top:45.77px;font-size:11.5px;line-height:11.5px;font-weight:700;color:#161513;">Map</div>
<svg class="s" style="left:1112px;top:50.5px;" width="7" height="7" viewBox="0 0 7 7"><path d="M0.9 3.2 L3.5 0.7 L6.1 3.2 M0.9 6.4 L3.5 3.9 L6.1 6.4" stroke="#161513" stroke-width="1.05" fill="none"/></svg>
<svg class="s" style="left:1152px;top:47px;" width="14" height="14" viewBox="0 0 14 14"><path d="M0.65 7.7 V2.2 A1.55 1.55 0 0 1 2.2 0.65 H12 A1.55 1.55 0 0 1 13.55 2.2 V11.8 A1.55 1.55 0 0 1 12 13.35 H6.2" stroke="#161513" stroke-width="1.3" fill="none"/><path d="M1.6 11.9 L8.2 5.5" stroke="#161513" stroke-width="1.8"/><path d="M3.8 5.4 H8.2 V10" stroke="#161513" stroke-width="1.8" fill="none"/></svg>
<svg class="s" style="left:1186px;top:46px;" width="15" height="15" viewBox="0 0 15 15"><circle cx="7" cy="7.9" r="6.2" stroke="#161513" stroke-width="1.2" fill="none"/><rect x="6.1" y="6" width="1.9" height="5.8" fill="#161513"/><rect x="6.1" y="4.1" width="1.9" height="1.2" fill="#161513"/></svg>
<div class="t" style="left:808.3px;top:73.77px;font-size:11.5px;line-height:11.5px;font-weight:700;color:#a8a6a4;">Actions</div>
<svg class="s" style="left:863px;top:77.5px;" width="9" height="5" viewBox="0 0 9 5"><path d="M0 0 H9 L4.5 5 Z" fill="#a8a6a4"/></svg>
<div class="r" style="left:893.5px;top:69px;width:1px;height:21px;background:#dcdad8;"></div>
<svg class="s" style="left:916px;top:71px;" width="12" height="15" viewBox="0 0 12 15"><path d="M3.6 7 V3.3 A2.7 2.7 0 0 1 9 3.3 V4.3" stroke="#161513" stroke-width="1.5" fill="none"/><rect x="0.75" y="7.25" width="10.5" height="7" fill="none" stroke="#161513" stroke-width="1.5"/><path d="M0.75 14 H11.25" stroke="#161513" stroke-width="1.2"/><path d="M4.5 10.6 H7.5" stroke="#161513" stroke-width="1.3"/></svg>
<svg class="s" style="left:959.5px;top:72.5px;" width="15" height="14" viewBox="0 0 15 14"><circle cx="9.6" cy="5" r="3.7" stroke="#161513" stroke-width="1.5" fill="none"/><path d="M9.6 5 L12 2.6" stroke="#161513" stroke-width="1.6"/><g transform="translate(7.1 7.6) rotate(45)"><rect x="-1.6" y="0" width="3.2" height="8" rx="1.6" fill="none" stroke="#161513" stroke-width="1.3"/></g></svg>
<svg class="s" style="left:1004px;top:72px;" width="14" height="14" viewBox="0 0 14 14"><circle cx="7" cy="7" r="4.6" fill="none" stroke="#161513" stroke-width="2.6" stroke-dasharray="2.2 1.4"/><circle cx="7" cy="7" r="4.3" fill="none" stroke="#161513" stroke-width="1.3"/><circle cx="7" cy="7" r="1.8" fill="none" stroke="#161513" stroke-width="1.3"/></svg>
<svg class="s" style="left:1049px;top:74.5px;" width="14" height="10" viewBox="0 0 14 10"><path d="M0.8 5 C3 1.5 5 0.8 7 0.8 C9 0.8 11 1.5 13.2 5 C11 8.5 9 9.2 7 9.2 C5 9.2 3 8.5 0.8 5 Z" stroke="#161513" stroke-width="1.4" fill="none"/><circle cx="7" cy="5" r="2" fill="none" stroke="#161513" stroke-width="1.5"/></svg>
<div class="r" style="left:1084.5px;top:69px;width:1px;height:21px;background:#dcdad8;"></div>
<svg class="s" style="left:1106px;top:72px;" width="16" height="14" viewBox="0 0 16 14"><path d="M3.5 0.8 C1.5 1.5 1 5 1 10 M12.5 0.8 C14.5 1.5 15 5 15 10" stroke="#161513" stroke-width="1.4" fill="none"/><circle cx="4" cy="10.3" r="2.8" fill="none" stroke="#161513" stroke-width="1.4"/><circle cx="12" cy="10.3" r="2.8" fill="none" stroke="#161513" stroke-width="1.4"/><path d="M6.8 10 H9.2" stroke="#161513" stroke-width="1.2"/></svg>
<svg class="s" style="left:1151px;top:73px;" width="6" height="13" viewBox="0 0 6 13"><path d="M0.7 3 L5.3 0.7 V10 L0.7 12.3 Z" stroke="#a8a6a4" stroke-width="1.2" fill="none"/></svg>
<div class="r" style="left:1158.5px;top:65px;width:41.5px;height:28px;background:#fcfbfa;"></div>
<div class="r" style="left:1158.5px;top:65px;width:1px;height:28px;background:#e8e6e4;"></div>
<svg class="s" style="left:1171.5px;top:68.5px;" width="8" height="11" viewBox="0 0 8 11"><path d="M1.5 1 L6 5.5 L1.5 10" stroke="#161513" stroke-width="1.6" fill="none"/></svg>
<div style="position:absolute;left:795px;top:94.2px;width:405px;height:189.5px;overflow:hidden;background:#f2efed;">
<svg style="position:absolute;left:0;top:0" width="405" height="190" viewBox="795 94.2 405 189.5">
<ellipse cx="826.6" cy="146.3" rx="2.3" ry="1.4" fill="#d5e6c8" opacity="0.85"/>
<ellipse cx="825.6" cy="133.0" rx="1.0" ry="1.5" fill="#d5e6c8" opacity="0.85"/>
<ellipse cx="826.7" cy="96.2" rx="0.9" ry="1.2" fill="#d5e6c8" opacity="0.85"/>
<ellipse cx="852.3" cy="164.5" rx="1.9" ry="0.8" fill="#d5e6c8" opacity="0.85"/>
<ellipse cx="862.0" cy="126.3" rx="1.8" ry="1.6" fill="#d5e6c8" opacity="0.85"/>
<ellipse cx="838.9" cy="139.4" rx="1.6" ry="0.8" fill="#d5e6c8" opacity="0.85"/>
<ellipse cx="840.5" cy="155.8" rx="0.8" ry="1.4" fill="#d5e6c8" opacity="0.85"/>
<ellipse cx="821.3" cy="156.1" rx="1.6" ry="1.7" fill="#d5e6c8" opacity="0.85"/>
<ellipse cx="824.2" cy="135.1" rx="1.5" ry="1.1" fill="#d5e6c8" opacity="0.85"/>
<ellipse cx="868.8" cy="133.5" rx="2.1" ry="1.8" fill="#d5e6c8" opacity="0.85"/>
<ellipse cx="835.3" cy="154.9" rx="1.2" ry="0.8" fill="#d5e6c8" opacity="0.85"/>
<ellipse cx="839.0" cy="104.8" rx="2.1" ry="1.3" fill="#d5e6c8" opacity="0.85"/>
<ellipse cx="855.5" cy="119.8" rx="0.7" ry="1.0" fill="#d5e6c8" opacity="0.85"/>
<ellipse cx="846.9" cy="116.9" rx="2.4" ry="1.3" fill="#d5e6c8" opacity="0.85"/>
<ellipse cx="849.8" cy="153.7" rx="2.0" ry="1.1" fill="#d5e6c8" opacity="0.85"/>
<ellipse cx="845.2" cy="149.0" rx="2.3" ry="1.8" fill="#d5e6c8" opacity="0.85"/>
<ellipse cx="843.2" cy="150.2" rx="0.9" ry="0.8" fill="#d5e6c8" opacity="0.85"/>
<ellipse cx="839.7" cy="117.0" rx="1.7" ry="1.4" fill="#d5e6c8" opacity="0.85"/>
<ellipse cx="843.5" cy="180.3" rx="0.9" ry="1.7" fill="#d5e6c8" opacity="0.85"/>
<ellipse cx="845.3" cy="156.0" rx="1.1" ry="1.1" fill="#d5e6c8" opacity="0.85"/>
<ellipse cx="854.6" cy="125.2" rx="1.2" ry="2.0" fill="#d5e6c8" opacity="0.85"/>
<ellipse cx="840.3" cy="164.1" rx="2.2" ry="1.7" fill="#d5e6c8" opacity="0.85"/>
<ellipse cx="860.7" cy="188.3" rx="1.1" ry="1.1" fill="#d5e6c8" opacity="0.85"/>
<ellipse cx="839.2" cy="108.5" rx="1.2" ry="0.8" fill="#d5e6c8" opacity="0.85"/>
<ellipse cx="848.4" cy="156.3" rx="1.1" ry="1.6" fill="#d5e6c8" opacity="0.85"/>
<ellipse cx="830.9" cy="158.8" rx="2.3" ry="1.4" fill="#d5e6c8" opacity="0.85"/>
<ellipse cx="821.3" cy="107.8" rx="1.0" ry="0.9" fill="#d5e6c8" opacity="0.85"/>
<ellipse cx="852.4" cy="104.9" rx="1.1" ry="1.0" fill="#d5e6c8" opacity="0.85"/>
<ellipse cx="836.5" cy="63.9" rx="1.0" ry="2.1" fill="#d5e6c8" opacity="0.85"/>
<ellipse cx="847.4" cy="107.5" rx="1.4" ry="0.9" fill="#d5e6c8" opacity="0.85"/>
<ellipse cx="861.2" cy="153.5" rx="1.1" ry="1.8" fill="#d5e6c8" opacity="0.85"/>
<ellipse cx="837.2" cy="190.8" rx="1.7" ry="1.1" fill="#d5e6c8" opacity="0.85"/>
<ellipse cx="844.7" cy="177.7" rx="0.8" ry="1.0" fill="#d5e6c8" opacity="0.85"/>
<ellipse cx="821.0" cy="113.6" rx="1.7" ry="1.1" fill="#d5e6c8" opacity="0.85"/>
<ellipse cx="843.5" cy="124.9" rx="0.7" ry="1.1" fill="#d5e6c8" opacity="0.85"/>
<ellipse cx="834.9" cy="138.5" rx="1.0" ry="1.3" fill="#d5e6c8" opacity="0.85"/>
<ellipse cx="833.5" cy="128.0" rx="1.3" ry="2.0" fill="#d5e6c8" opacity="0.85"/>
<ellipse cx="851.5" cy="129.6" rx="1.9" ry="1.6" fill="#d5e6c8" opacity="0.85"/>
<ellipse cx="839.6" cy="141.2" rx="0.7" ry="2.1" fill="#d5e6c8" opacity="0.85"/>
<ellipse cx="830.7" cy="61.7" rx="0.7" ry="1.7" fill="#d5e6c8" opacity="0.85"/>
<ellipse cx="823.0" cy="140.4" rx="1.2" ry="2.2" fill="#d5e6c8" opacity="0.85"/>
<ellipse cx="848.4" cy="152.2" rx="2.0" ry="2.1" fill="#d5e6c8" opacity="0.85"/>
<ellipse cx="836.8" cy="88.4" rx="2.0" ry="2.1" fill="#d5e6c8" opacity="0.85"/>
<ellipse cx="829.5" cy="171.6" rx="2.2" ry="2.0" fill="#d5e6c8" opacity="0.85"/>
<ellipse cx="823.7" cy="161.4" rx="2.2" ry="1.6" fill="#d5e6c8" opacity="0.85"/>
<ellipse cx="831.5" cy="114.2" rx="1.7" ry="1.6" fill="#d5e6c8" opacity="0.85"/>
<ellipse cx="849.7" cy="155.7" rx="2.4" ry="2.0" fill="#d5e6c8" opacity="0.85"/>
<ellipse cx="836.7" cy="105.5" rx="1.9" ry="1.6" fill="#d5e6c8" opacity="0.85"/>
<ellipse cx="821.4" cy="155.9" rx="0.8" ry="1.8" fill="#d5e6c8" opacity="0.85"/>
<ellipse cx="850.4" cy="142.6" rx="1.5" ry="1.0" fill="#d5e6c8" opacity="0.85"/>
<ellipse cx="834.5" cy="101.7" rx="1.7" ry="2.1" fill="#d5e6c8" opacity="0.85"/>
<ellipse cx="837.9" cy="139.5" rx="1.2" ry="1.7" fill="#d5e6c8" opacity="0.85"/>
<ellipse cx="839.7" cy="152.5" rx="2.2" ry="1.7" fill="#d5e6c8" opacity="0.85"/>
<ellipse cx="819.6" cy="157.6" rx="1.3" ry="1.7" fill="#d5e6c8" opacity="0.85"/>
<ellipse cx="841.2" cy="165.2" rx="2.1" ry="2.1" fill="#d5e6c8" opacity="0.85"/>
<ellipse cx="844.7" cy="114.8" rx="1.7" ry="1.2" fill="#d5e6c8" opacity="0.85"/>
<ellipse cx="845.2" cy="161.5" rx="2.1" ry="2.0" fill="#d5e6c8" opacity="0.85"/>
<ellipse cx="832.5" cy="63.7" rx="1.2" ry="1.0" fill="#d5e6c8" opacity="0.85"/>
<ellipse cx="830.9" cy="142.3" rx="1.1" ry="1.3" fill="#d5e6c8" opacity="0.85"/>
<ellipse cx="830.3" cy="110.1" rx="1.2" ry="2.0" fill="#d5e6c8" opacity="0.85"/>
<ellipse cx="848.2" cy="131.3" rx="0.8" ry="0.7" fill="#d5e6c8" opacity="0.85"/>
<ellipse cx="839.9" cy="128.7" rx="1.9" ry="1.6" fill="#d5e6c8" opacity="0.85"/>
<ellipse cx="832.0" cy="184.5" rx="0.7" ry="0.9" fill="#d5e6c8" opacity="0.85"/>
<ellipse cx="836.0" cy="136.9" rx="2.1" ry="1.1" fill="#d5e6c8" opacity="0.85"/>
<ellipse cx="839.8" cy="142.2" rx="1.8" ry="1.4" fill="#d5e6c8" opacity="0.85"/>
<ellipse cx="828.7" cy="103.1" rx="2.1" ry="2.1" fill="#d5e6c8" opacity="0.85"/>
<ellipse cx="835.5" cy="116.7" rx="1.5" ry="1.0" fill="#d5e6c8" opacity="0.85"/>
<ellipse cx="848.5" cy="137.3" rx="1.9" ry="1.0" fill="#d5e6c8" opacity="0.85"/>
<ellipse cx="836.8" cy="162.4" rx="1.9" ry="1.5" fill="#d5e6c8" opacity="0.85"/>
<ellipse cx="826.2" cy="101.8" rx="1.4" ry="1.9" fill="#d5e6c8" opacity="0.85"/>
<ellipse cx="841.3" cy="127.9" rx="2.3" ry="1.8" fill="#d5e6c8" opacity="0.85"/>
<ellipse cx="845.0" cy="159.0" rx="1.8" ry="2.1" fill="#d5e6c8" opacity="0.85"/>
<ellipse cx="829.3" cy="162.2" rx="2.2" ry="1.9" fill="#d5e6c8" opacity="0.85"/>
<ellipse cx="847.8" cy="123.5" rx="1.8" ry="1.0" fill="#d5e6c8" opacity="0.85"/>
<ellipse cx="835.0" cy="80.5" rx="1.8" ry="1.8" fill="#d5e6c8" opacity="0.85"/>
<ellipse cx="842.6" cy="197.7" rx="2.4" ry="2.2" fill="#d5e6c8" opacity="0.85"/>
<ellipse cx="821.9" cy="122.8" rx="1.2" ry="2.1" fill="#d5e6c8" opacity="0.85"/>
<ellipse cx="843.3" cy="113.1" rx="0.8" ry="1.4" fill="#d5e6c8" opacity="0.85"/>
<ellipse cx="822.8" cy="119.1" rx="1.5" ry="0.7" fill="#d5e6c8" opacity="0.85"/>
<ellipse cx="839.2" cy="124.8" rx="2.1" ry="1.0" fill="#d5e6c8" opacity="0.85"/>
<ellipse cx="829.6" cy="180.5" rx="0.9" ry="0.9" fill="#d5e6c8" opacity="0.85"/>
<ellipse cx="823.1" cy="130.0" rx="2.1" ry="1.7" fill="#d5e6c8" opacity="0.85"/>
<ellipse cx="848.2" cy="123.3" rx="2.3" ry="0.8" fill="#d5e6c8" opacity="0.85"/>
<ellipse cx="840.0" cy="171.1" rx="1.2" ry="1.8" fill="#d5e6c8" opacity="0.85"/>
<ellipse cx="830.7" cy="107.0" rx="2.1" ry="1.5" fill="#d5e6c8" opacity="0.85"/>
<ellipse cx="834.5" cy="162.2" rx="2.1" ry="2.1" fill="#d5e6c8" opacity="0.85"/>
<ellipse cx="842.7" cy="191.5" rx="2.3" ry="1.5" fill="#d5e6c8" opacity="0.85"/>
<ellipse cx="832.4" cy="126.1" rx="1.6" ry="1.5" fill="#d5e6c8" opacity="0.85"/>
<ellipse cx="836.3" cy="130.6" rx="2.3" ry="1.5" fill="#d5e6c8" opacity="0.85"/>
<ellipse cx="824.4" cy="166.5" rx="1.7" ry="1.4" fill="#d5e6c8" opacity="0.85"/>
<ellipse cx="836.8" cy="124.7" rx="1.6" ry="1.3" fill="#d5e6c8" opacity="0.85"/>
<ellipse cx="858.4" cy="116.8" rx="1.2" ry="1.4" fill="#d5e6c8" opacity="0.85"/>
<ellipse cx="845.0" cy="157.9" rx="2.1" ry="2.1" fill="#d5e6c8" opacity="0.85"/>
<ellipse cx="829.9" cy="138.9" rx="1.0" ry="1.6" fill="#d5e6c8" opacity="0.85"/>
<ellipse cx="842.4" cy="127.9" rx="2.0" ry="0.7" fill="#d5e6c8" opacity="0.85"/>
<ellipse cx="840.3" cy="155.2" rx="1.9" ry="1.2" fill="#d5e6c8" opacity="0.85"/>
<ellipse cx="830.0" cy="167.9" rx="0.9" ry="1.8" fill="#d5e6c8" opacity="0.85"/>
<ellipse cx="846.0" cy="160.0" rx="1.1" ry="1.0" fill="#d5e6c8" opacity="0.85"/>
<ellipse cx="828.2" cy="128.9" rx="1.3" ry="1.3" fill="#d5e6c8" opacity="0.85"/>
<ellipse cx="832.6" cy="131.8" rx="1.0" ry="1.6" fill="#d5e6c8" opacity="0.85"/>
<ellipse cx="830.6" cy="106.8" rx="2.1" ry="1.6" fill="#d5e6c8" opacity="0.85"/>
<ellipse cx="842.2" cy="117.9" rx="2.0" ry="1.9" fill="#d5e6c8" opacity="0.85"/>
<ellipse cx="844.7" cy="120.0" rx="1.2" ry="2.1" fill="#d5e6c8" opacity="0.85"/>
<ellipse cx="844.6" cy="240.3" rx="2.2" ry="0.9" fill="#d5e6c8" opacity="0.85"/>
<ellipse cx="839.0" cy="183.2" rx="1.1" ry="0.8" fill="#d5e6c8" opacity="0.85"/>
<ellipse cx="842.8" cy="107.7" rx="2.0" ry="0.9" fill="#d5e6c8" opacity="0.85"/>
<ellipse cx="826.4" cy="161.2" rx="0.7" ry="1.0" fill="#d5e6c8" opacity="0.85"/>
<ellipse cx="829.5" cy="74.8" rx="2.3" ry="0.9" fill="#d5e6c8" opacity="0.85"/>
<ellipse cx="822.3" cy="133.2" rx="1.6" ry="1.7" fill="#d5e6c8" opacity="0.85"/>
<ellipse cx="839.3" cy="145.6" rx="0.9" ry="0.8" fill="#d5e6c8" opacity="0.85"/>
<ellipse cx="817.4" cy="118.6" rx="1.7" ry="0.9" fill="#d5e6c8" opacity="0.85"/>
<ellipse cx="826.8" cy="135.3" rx="2.1" ry="2.2" fill="#d5e6c8" opacity="0.85"/>
<ellipse cx="827.7" cy="121.7" rx="0.8" ry="2.1" fill="#d5e6c8" opacity="0.85"/>
<ellipse cx="814.0" cy="131.7" rx="1.3" ry="1.4" fill="#d5e6c8" opacity="0.85"/>
<ellipse cx="818.0" cy="123.3" rx="1.7" ry="0.7" fill="#d5e6c8" opacity="0.85"/>
<ellipse cx="821.1" cy="94.4" rx="1.0" ry="1.4" fill="#d5e6c8" opacity="0.85"/>
<ellipse cx="824.5" cy="108.0" rx="1.0" ry="0.9" fill="#d5e6c8" opacity="0.85"/>
<ellipse cx="823.8" cy="124.8" rx="2.2" ry="1.9" fill="#d5e6c8" opacity="0.85"/>
<ellipse cx="821.3" cy="93.2" rx="1.8" ry="1.3" fill="#d5e6c8" opacity="0.85"/>
<ellipse cx="818.6" cy="113.4" rx="2.4" ry="1.9" fill="#d5e6c8" opacity="0.85"/>
<ellipse cx="824.2" cy="161.6" rx="2.0" ry="1.9" fill="#d5e6c8" opacity="0.85"/>
<ellipse cx="827.7" cy="109.4" rx="2.2" ry="2.0" fill="#d5e6c8" opacity="0.85"/>
<ellipse cx="821.1" cy="98.2" rx="2.0" ry="1.3" fill="#d5e6c8" opacity="0.85"/>
<ellipse cx="824.6" cy="118.7" rx="1.3" ry="1.4" fill="#d5e6c8" opacity="0.85"/>
<ellipse cx="831.2" cy="126.0" rx="1.8" ry="1.6" fill="#d5e6c8" opacity="0.85"/>
<ellipse cx="826.8" cy="164.8" rx="1.8" ry="1.2" fill="#d5e6c8" opacity="0.85"/>
<ellipse cx="820.4" cy="106.7" rx="1.6" ry="1.3" fill="#d5e6c8" opacity="0.85"/>
<ellipse cx="834.6" cy="125.0" rx="1.9" ry="1.8" fill="#d5e6c8" opacity="0.85"/>
<ellipse cx="826.4" cy="124.6" rx="1.7" ry="1.8" fill="#d5e6c8" opacity="0.85"/>
<ellipse cx="824.7" cy="141.9" rx="0.8" ry="1.0" fill="#d5e6c8" opacity="0.85"/>
<ellipse cx="822.8" cy="130.3" rx="1.1" ry="2.1" fill="#d5e6c8" opacity="0.85"/>
<ellipse cx="817.5" cy="118.9" rx="2.3" ry="1.6" fill="#d5e6c8" opacity="0.85"/>
<ellipse cx="834.5" cy="124.3" rx="2.1" ry="0.8" fill="#d5e6c8" opacity="0.85"/>
<ellipse cx="815.8" cy="108.8" rx="0.8" ry="2.1" fill="#d5e6c8" opacity="0.85"/>
<ellipse cx="829.0" cy="140.9" rx="1.0" ry="1.4" fill="#d5e6c8" opacity="0.85"/>
<ellipse cx="823.2" cy="121.3" rx="2.3" ry="1.3" fill="#d5e6c8" opacity="0.85"/>
<ellipse cx="816.1" cy="121.2" rx="1.3" ry="1.1" fill="#d5e6c8" opacity="0.85"/>
<ellipse cx="820.2" cy="107.3" rx="1.2" ry="1.8" fill="#d5e6c8" opacity="0.85"/>
<ellipse cx="824.7" cy="127.7" rx="1.1" ry="0.8" fill="#d5e6c8" opacity="0.85"/>
<ellipse cx="831.2" cy="148.3" rx="1.4" ry="2.0" fill="#d5e6c8" opacity="0.85"/>
<ellipse cx="825.0" cy="119.7" rx="2.4" ry="2.1" fill="#d5e6c8" opacity="0.85"/>
<ellipse cx="838.0" cy="141.1" rx="1.4" ry="1.4" fill="#d5e6c8" opacity="0.85"/>
<ellipse cx="829.9" cy="122.9" rx="1.6" ry="2.1" fill="#d5e6c8" opacity="0.85"/>
<ellipse cx="823.7" cy="106.5" rx="2.4" ry="1.9" fill="#d5e6c8" opacity="0.85"/>
<ellipse cx="822.4" cy="120.0" rx="1.8" ry="1.4" fill="#d5e6c8" opacity="0.85"/>
<ellipse cx="825.6" cy="130.2" rx="1.6" ry="0.9" fill="#d5e6c8" opacity="0.85"/>
<ellipse cx="815.7" cy="133.7" rx="1.5" ry="1.1" fill="#d5e6c8" opacity="0.85"/>
<ellipse cx="819.0" cy="116.4" rx="2.0" ry="1.5" fill="#d5e6c8" opacity="0.85"/>
<ellipse cx="841.5" cy="124.4" rx="1.9" ry="1.1" fill="#d5e6c8" opacity="0.85"/>
<ellipse cx="835.6" cy="148.1" rx="2.0" ry="1.6" fill="#d5e6c8" opacity="0.85"/>
<ellipse cx="871.3" cy="142.3" rx="1.9" ry="1.5" fill="#d5e6c8" opacity="0.85"/>
<ellipse cx="859.4" cy="114.6" rx="2.0" ry="1.0" fill="#d5e6c8" opacity="0.85"/>
<ellipse cx="880.3" cy="185.8" rx="2.3" ry="2.0" fill="#d5e6c8" opacity="0.85"/>
<ellipse cx="886.0" cy="131.7" rx="1.2" ry="1.3" fill="#d5e6c8" opacity="0.85"/>
<ellipse cx="874.2" cy="123.5" rx="1.6" ry="0.8" fill="#d5e6c8" opacity="0.85"/>
<ellipse cx="902.3" cy="145.5" rx="1.6" ry="1.6" fill="#d5e6c8" opacity="0.85"/>
<ellipse cx="866.2" cy="146.3" rx="1.1" ry="1.2" fill="#d5e6c8" opacity="0.85"/>
<ellipse cx="878.9" cy="91.8" rx="0.8" ry="0.9" fill="#d5e6c8" opacity="0.85"/>
<ellipse cx="888.8" cy="103.9" rx="2.0" ry="1.0" fill="#d5e6c8" opacity="0.85"/>
<ellipse cx="868.1" cy="137.1" rx="2.1" ry="1.3" fill="#d5e6c8" opacity="0.85"/>
<ellipse cx="850.3" cy="80.5" rx="1.3" ry="1.5" fill="#d5e6c8" opacity="0.85"/>
<ellipse cx="879.0" cy="85.0" rx="1.4" ry="1.3" fill="#d5e6c8" opacity="0.85"/>
<ellipse cx="909.0" cy="153.4" rx="0.8" ry="0.8" fill="#d5e6c8" opacity="0.85"/>
<ellipse cx="861.6" cy="121.0" rx="1.9" ry="1.1" fill="#d5e6c8" opacity="0.85"/>
<ellipse cx="881.1" cy="122.1" rx="1.1" ry="1.7" fill="#d5e6c8" opacity="0.85"/>
<ellipse cx="892.8" cy="138.4" rx="1.9" ry="1.7" fill="#d5e6c8" opacity="0.85"/>
<ellipse cx="878.0" cy="140.9" rx="1.3" ry="1.8" fill="#d5e6c8" opacity="0.85"/>
<ellipse cx="874.2" cy="137.4" rx="1.9" ry="1.6" fill="#d5e6c8" opacity="0.85"/>
<ellipse cx="915.8" cy="106.8" rx="2.3" ry="1.4" fill="#d5e6c8" opacity="0.85"/>
<ellipse cx="884.8" cy="113.9" rx="1.2" ry="1.3" fill="#d5e6c8" opacity="0.85"/>
<ellipse cx="913.7" cy="113.1" rx="1.1" ry="1.2" fill="#d5e6c8" opacity="0.85"/>
<ellipse cx="869.1" cy="144.2" rx="1.4" ry="1.3" fill="#d5e6c8" opacity="0.85"/>
<ellipse cx="887.6" cy="154.2" rx="2.1" ry="1.5" fill="#d5e6c8" opacity="0.85"/>
<ellipse cx="891.5" cy="108.0" rx="1.0" ry="1.8" fill="#d5e6c8" opacity="0.85"/>
<ellipse cx="890.3" cy="118.9" rx="0.7" ry="1.5" fill="#d5e6c8" opacity="0.85"/>
<ellipse cx="858.4" cy="122.9" rx="2.3" ry="1.7" fill="#d5e6c8" opacity="0.85"/>
<ellipse cx="882.1" cy="123.1" rx="1.6" ry="1.9" fill="#d5e6c8" opacity="0.85"/>
<ellipse cx="886.2" cy="134.2" rx="2.0" ry="2.0" fill="#d5e6c8" opacity="0.85"/>
<ellipse cx="901.2" cy="144.4" rx="0.9" ry="1.8" fill="#d5e6c8" opacity="0.85"/>
<ellipse cx="872.3" cy="117.9" rx="1.1" ry="1.8" fill="#d5e6c8" opacity="0.85"/>
<ellipse cx="850.8" cy="125.4" rx="1.4" ry="1.2" fill="#d5e6c8" opacity="0.85"/>
<ellipse cx="905.4" cy="124.1" rx="1.5" ry="1.5" fill="#d5e6c8" opacity="0.85"/>
<ellipse cx="875.1" cy="99.1" rx="2.3" ry="1.3" fill="#d5e6c8" opacity="0.85"/>
<ellipse cx="891.8" cy="103.7" rx="2.2" ry="1.9" fill="#d5e6c8" opacity="0.85"/>
<ellipse cx="898.3" cy="93.8" rx="2.3" ry="1.7" fill="#d5e6c8" opacity="0.85"/>
<ellipse cx="853.0" cy="125.3" rx="2.1" ry="1.3" fill="#d5e6c8" opacity="0.85"/>
<ellipse cx="871.4" cy="135.4" rx="2.0" ry="2.2" fill="#d5e6c8" opacity="0.85"/>
<ellipse cx="872.6" cy="138.5" rx="1.0" ry="1.3" fill="#d5e6c8" opacity="0.85"/>
<ellipse cx="868.0" cy="181.1" rx="0.8" ry="1.2" fill="#d5e6c8" opacity="0.85"/>
<ellipse cx="898.8" cy="149.1" rx="2.0" ry="1.0" fill="#d5e6c8" opacity="0.85"/>
<ellipse cx="897.8" cy="138.5" rx="1.7" ry="2.1" fill="#d5e6c8" opacity="0.85"/>
<ellipse cx="888.1" cy="132.2" rx="1.0" ry="1.0" fill="#d5e6c8" opacity="0.85"/>
<ellipse cx="882.5" cy="161.7" rx="1.7" ry="1.0" fill="#d5e6c8" opacity="0.85"/>
<ellipse cx="885.6" cy="144.9" rx="1.0" ry="1.8" fill="#d5e6c8" opacity="0.85"/>
<ellipse cx="871.7" cy="153.3" rx="2.1" ry="1.4" fill="#d5e6c8" opacity="0.85"/>
<ellipse cx="877.6" cy="171.7" rx="2.3" ry="1.2" fill="#d5e6c8" opacity="0.85"/>
<ellipse cx="838.4" cy="115.3" rx="1.5" ry="1.0" fill="#d5e6c8" opacity="0.85"/>
<ellipse cx="920.0" cy="144.9" rx="2.1" ry="1.3" fill="#d5e6c8" opacity="0.85"/>
<ellipse cx="859.4" cy="125.8" rx="1.2" ry="2.2" fill="#d5e6c8" opacity="0.85"/>
<ellipse cx="873.0" cy="117.7" rx="0.7" ry="1.4" fill="#d5e6c8" opacity="0.85"/>
<ellipse cx="858.6" cy="155.8" rx="1.9" ry="1.6" fill="#d5e6c8" opacity="0.85"/>
<ellipse cx="885.6" cy="139.8" rx="1.2" ry="1.1" fill="#d5e6c8" opacity="0.85"/>
<ellipse cx="894.2" cy="112.4" rx="1.8" ry="2.2" fill="#d5e6c8" opacity="0.85"/>
<ellipse cx="877.8" cy="154.6" rx="1.0" ry="1.9" fill="#d5e6c8" opacity="0.85"/>
<ellipse cx="912.2" cy="130.3" rx="2.1" ry="1.9" fill="#d5e6c8" opacity="0.85"/>
<ellipse cx="891.9" cy="137.9" rx="1.9" ry="0.8" fill="#d5e6c8" opacity="0.85"/>
<ellipse cx="860.7" cy="132.8" rx="2.3" ry="1.6" fill="#d5e6c8" opacity="0.85"/>
<ellipse cx="889.2" cy="116.7" rx="2.0" ry="1.3" fill="#d5e6c8" opacity="0.85"/>
<ellipse cx="886.6" cy="125.6" rx="2.1" ry="1.0" fill="#d5e6c8" opacity="0.85"/>
<ellipse cx="859.6" cy="123.4" rx="1.0" ry="1.9" fill="#d5e6c8" opacity="0.85"/>
<ellipse cx="874.4" cy="146.0" rx="0.8" ry="1.2" fill="#d5e6c8" opacity="0.85"/>
<ellipse cx="853.1" cy="136.5" rx="1.3" ry="1.7" fill="#d5e6c8" opacity="0.85"/>
<ellipse cx="893.7" cy="142.3" rx="1.5" ry="2.2" fill="#d5e6c8" opacity="0.85"/>
<ellipse cx="892.1" cy="104.4" rx="0.7" ry="1.3" fill="#d5e6c8" opacity="0.85"/>
<ellipse cx="876.8" cy="115.7" rx="1.7" ry="1.4" fill="#d5e6c8" opacity="0.85"/>
<ellipse cx="933.5" cy="134.1" rx="2.1" ry="1.0" fill="#d5e6c8" opacity="0.85"/>
<ellipse cx="869.3" cy="119.0" rx="1.3" ry="1.5" fill="#d5e6c8" opacity="0.85"/>
<ellipse cx="875.3" cy="147.3" rx="1.4" ry="1.7" fill="#d5e6c8" opacity="0.85"/>
<ellipse cx="879.5" cy="143.3" rx="1.9" ry="1.2" fill="#d5e6c8" opacity="0.85"/>
<ellipse cx="901.0" cy="121.3" rx="1.9" ry="1.2" fill="#d5e6c8" opacity="0.85"/>
<ellipse cx="883.5" cy="122.2" rx="0.9" ry="0.8" fill="#d5e6c8" opacity="0.85"/>
<ellipse cx="868.1" cy="101.8" rx="1.0" ry="1.3" fill="#d5e6c8" opacity="0.85"/>
<ellipse cx="892.1" cy="107.1" rx="0.9" ry="1.0" fill="#d5e6c8" opacity="0.85"/>
<ellipse cx="884.9" cy="138.6" rx="1.4" ry="0.8" fill="#d5e6c8" opacity="0.85"/>
<ellipse cx="896.1" cy="119.9" rx="1.6" ry="1.7" fill="#d5e6c8" opacity="0.85"/>
<ellipse cx="883.4" cy="93.1" rx="1.4" ry="1.2" fill="#d5e6c8" opacity="0.85"/>
<ellipse cx="877.4" cy="131.8" rx="1.4" ry="1.7" fill="#d5e6c8" opacity="0.85"/>
<ellipse cx="910.4" cy="126.0" rx="1.8" ry="1.6" fill="#d5e6c8" opacity="0.85"/>
<ellipse cx="895.4" cy="132.1" rx="1.3" ry="1.7" fill="#d5e6c8" opacity="0.85"/>
<ellipse cx="893.3" cy="142.1" rx="1.6" ry="1.9" fill="#d5e6c8" opacity="0.85"/>
<ellipse cx="890.8" cy="105.5" rx="1.0" ry="1.8" fill="#d5e6c8" opacity="0.85"/>
<ellipse cx="897.9" cy="115.6" rx="1.3" ry="1.5" fill="#d5e6c8" opacity="0.85"/>
<ellipse cx="897.2" cy="154.6" rx="2.4" ry="1.5" fill="#d5e6c8" opacity="0.85"/>
<ellipse cx="872.9" cy="92.9" rx="1.0" ry="2.1" fill="#d5e6c8" opacity="0.85"/>
<ellipse cx="872.0" cy="120.5" rx="0.8" ry="1.1" fill="#d5e6c8" opacity="0.85"/>
<ellipse cx="856.2" cy="115.7" rx="1.3" ry="2.1" fill="#d5e6c8" opacity="0.85"/>
<ellipse cx="867.6" cy="147.1" rx="0.9" ry="2.2" fill="#d5e6c8" opacity="0.85"/>
<ellipse cx="904.7" cy="162.6" rx="1.6" ry="1.5" fill="#d5e6c8" opacity="0.85"/>
<ellipse cx="867.4" cy="124.2" rx="2.2" ry="2.2" fill="#d5e6c8" opacity="0.85"/>
<ellipse cx="889.7" cy="105.3" rx="0.9" ry="1.9" fill="#d5e6c8" opacity="0.85"/>
<ellipse cx="871.1" cy="171.4" rx="1.1" ry="1.6" fill="#d5e6c8" opacity="0.85"/>
<ellipse cx="885.4" cy="118.8" rx="1.6" ry="0.8" fill="#d5e6c8" opacity="0.85"/>
<ellipse cx="890.7" cy="132.5" rx="2.4" ry="2.1" fill="#d5e6c8" opacity="0.85"/>
<ellipse cx="871.9" cy="115.6" rx="1.8" ry="1.8" fill="#d5e6c8" opacity="0.85"/>
<ellipse cx="862.9" cy="148.1" rx="2.1" ry="0.7" fill="#d5e6c8" opacity="0.85"/>
<ellipse cx="886.1" cy="151.4" rx="0.9" ry="1.3" fill="#d5e6c8" opacity="0.85"/>
<ellipse cx="870.3" cy="124.8" rx="1.6" ry="1.1" fill="#d5e6c8" opacity="0.85"/>
<ellipse cx="865.8" cy="122.6" rx="1.8" ry="0.8" fill="#d5e6c8" opacity="0.85"/>
<ellipse cx="875.4" cy="120.2" rx="2.3" ry="1.6" fill="#d5e6c8" opacity="0.85"/>
<ellipse cx="862.5" cy="133.9" rx="1.8" ry="1.7" fill="#d5e6c8" opacity="0.85"/>
<ellipse cx="881.5" cy="96.7" rx="1.5" ry="2.2" fill="#d5e6c8" opacity="0.85"/>
<ellipse cx="897.9" cy="96.6" rx="1.4" ry="1.4" fill="#d5e6c8" opacity="0.85"/>
<ellipse cx="845.6" cy="112.5" rx="1.6" ry="1.5" fill="#d5e6c8" opacity="0.85"/>
<ellipse cx="845.8" cy="147.9" rx="1.2" ry="0.8" fill="#d5e6c8" opacity="0.85"/>
<ellipse cx="874.3" cy="87.6" rx="1.9" ry="1.6" fill="#d5e6c8" opacity="0.85"/>
<ellipse cx="880.2" cy="112.9" rx="1.7" ry="0.8" fill="#d5e6c8" opacity="0.85"/>
<ellipse cx="893.4" cy="145.3" rx="1.6" ry="1.3" fill="#d5e6c8" opacity="0.85"/>
<ellipse cx="905.3" cy="139.9" rx="1.6" ry="1.1" fill="#d5e6c8" opacity="0.85"/>
<ellipse cx="874.0" cy="148.8" rx="1.1" ry="0.8" fill="#d5e6c8" opacity="0.85"/>
<ellipse cx="918.3" cy="102.4" rx="1.8" ry="2.0" fill="#d5e6c8" opacity="0.85"/>
<ellipse cx="896.5" cy="120.7" rx="1.1" ry="1.8" fill="#d5e6c8" opacity="0.85"/>
<ellipse cx="894.5" cy="109.1" rx="0.9" ry="1.9" fill="#d5e6c8" opacity="0.85"/>
<ellipse cx="909.7" cy="120.8" rx="2.3" ry="0.7" fill="#d5e6c8" opacity="0.85"/>
<ellipse cx="905.2" cy="120.6" rx="1.3" ry="0.8" fill="#d5e6c8" opacity="0.85"/>
<ellipse cx="912.8" cy="107.5" rx="1.4" ry="1.2" fill="#d5e6c8" opacity="0.85"/>
<ellipse cx="903.6" cy="114.0" rx="0.8" ry="2.0" fill="#d5e6c8" opacity="0.85"/>
<ellipse cx="902.8" cy="122.3" rx="2.3" ry="2.2" fill="#d5e6c8" opacity="0.85"/>
<ellipse cx="901.4" cy="115.8" rx="1.2" ry="2.1" fill="#d5e6c8" opacity="0.85"/>
<ellipse cx="907.8" cy="112.3" rx="2.1" ry="1.2" fill="#d5e6c8" opacity="0.85"/>
<ellipse cx="901.8" cy="115.7" rx="2.2" ry="2.2" fill="#d5e6c8" opacity="0.85"/>
<ellipse cx="907.2" cy="124.0" rx="1.0" ry="2.0" fill="#d5e6c8" opacity="0.85"/>
<ellipse cx="907.4" cy="116.0" rx="1.9" ry="1.2" fill="#d5e6c8" opacity="0.85"/>
<ellipse cx="913.7" cy="107.1" rx="1.9" ry="0.9" fill="#d5e6c8" opacity="0.85"/>
<ellipse cx="900.8" cy="100.2" rx="1.5" ry="0.8" fill="#d5e6c8" opacity="0.85"/>
<ellipse cx="905.8" cy="120.6" rx="1.9" ry="1.0" fill="#d5e6c8" opacity="0.85"/>
<ellipse cx="906.6" cy="119.4" rx="1.8" ry="1.9" fill="#d5e6c8" opacity="0.85"/>
<ellipse cx="899.5" cy="122.1" rx="2.2" ry="1.6" fill="#d5e6c8" opacity="0.85"/>
<ellipse cx="905.6" cy="120.6" rx="2.3" ry="1.7" fill="#d5e6c8" opacity="0.85"/>
<ellipse cx="903.7" cy="124.4" rx="0.9" ry="2.2" fill="#d5e6c8" opacity="0.85"/>
<ellipse cx="898.9" cy="118.0" rx="1.6" ry="0.8" fill="#d5e6c8" opacity="0.85"/>
<ellipse cx="837.6" cy="207.0" rx="1.1" ry="1.9" fill="#d5e6c8" opacity="0.85"/>
<ellipse cx="863.1" cy="222.1" rx="2.0" ry="1.1" fill="#d5e6c8" opacity="0.85"/>
<ellipse cx="845.7" cy="235.7" rx="1.0" ry="2.0" fill="#d5e6c8" opacity="0.85"/>
<ellipse cx="854.9" cy="214.7" rx="1.5" ry="1.8" fill="#d5e6c8" opacity="0.85"/>
<ellipse cx="817.8" cy="240.4" rx="1.5" ry="1.0" fill="#d5e6c8" opacity="0.85"/>
<ellipse cx="824.8" cy="206.7" rx="1.3" ry="1.7" fill="#d5e6c8" opacity="0.85"/>
<ellipse cx="854.6" cy="195.3" rx="1.6" ry="2.0" fill="#d5e6c8" opacity="0.85"/>
<ellipse cx="840.9" cy="196.5" rx="2.3" ry="1.0" fill="#d5e6c8" opacity="0.85"/>
<ellipse cx="852.1" cy="205.2" rx="1.7" ry="1.1" fill="#d5e6c8" opacity="0.85"/>
<ellipse cx="820.1" cy="225.5" rx="2.0" ry="1.9" fill="#d5e6c8" opacity="0.85"/>
<ellipse cx="851.9" cy="234.2" rx="1.1" ry="1.6" fill="#d5e6c8" opacity="0.85"/>
<ellipse cx="845.0" cy="215.0" rx="1.7" ry="1.8" fill="#d5e6c8" opacity="0.85"/>
<ellipse cx="816.0" cy="200.1" rx="1.0" ry="0.9" fill="#d5e6c8" opacity="0.85"/>
<ellipse cx="871.7" cy="217.2" rx="1.4" ry="1.4" fill="#d5e6c8" opacity="0.85"/>
<ellipse cx="847.3" cy="244.7" rx="0.8" ry="2.1" fill="#d5e6c8" opacity="0.85"/>
<ellipse cx="828.8" cy="206.2" rx="2.0" ry="1.1" fill="#d5e6c8" opacity="0.85"/>
<ellipse cx="859.8" cy="226.4" rx="0.8" ry="1.2" fill="#d5e6c8" opacity="0.85"/>
<ellipse cx="833.5" cy="201.0" rx="1.2" ry="1.6" fill="#d5e6c8" opacity="0.85"/>
<ellipse cx="879.4" cy="231.3" rx="1.0" ry="1.1" fill="#d5e6c8" opacity="0.85"/>
<ellipse cx="865.4" cy="236.5" rx="2.1" ry="1.9" fill="#d5e6c8" opacity="0.85"/>
<ellipse cx="867.8" cy="221.4" rx="1.3" ry="1.0" fill="#d5e6c8" opacity="0.85"/>
<ellipse cx="855.4" cy="214.1" rx="1.5" ry="1.8" fill="#d5e6c8" opacity="0.85"/>
<ellipse cx="860.4" cy="214.2" rx="1.5" ry="1.8" fill="#d5e6c8" opacity="0.85"/>
<ellipse cx="863.4" cy="218.0" rx="2.2" ry="0.9" fill="#d5e6c8" opacity="0.85"/>
<ellipse cx="837.7" cy="223.7" rx="1.4" ry="0.8" fill="#d5e6c8" opacity="0.85"/>
<ellipse cx="910.8" cy="226.9" rx="2.0" ry="1.8" fill="#d5e6c8" opacity="0.85"/>
<ellipse cx="851.8" cy="227.6" rx="1.6" ry="1.1" fill="#d5e6c8" opacity="0.85"/>
<ellipse cx="807.9" cy="224.3" rx="1.3" ry="1.2" fill="#d5e6c8" opacity="0.85"/>
<ellipse cx="875.5" cy="212.3" rx="0.8" ry="1.3" fill="#d5e6c8" opacity="0.85"/>
<ellipse cx="846.2" cy="210.3" rx="1.3" ry="1.7" fill="#d5e6c8" opacity="0.85"/>
<ellipse cx="866.4" cy="198.2" rx="2.2" ry="1.4" fill="#d5e6c8" opacity="0.85"/>
<ellipse cx="821.9" cy="235.0" rx="1.3" ry="1.9" fill="#d5e6c8" opacity="0.85"/>
<ellipse cx="853.7" cy="230.0" rx="1.0" ry="1.5" fill="#d5e6c8" opacity="0.85"/>
<ellipse cx="856.5" cy="224.6" rx="1.1" ry="1.4" fill="#d5e6c8" opacity="0.85"/>
<ellipse cx="842.7" cy="231.9" rx="2.4" ry="1.7" fill="#d5e6c8" opacity="0.85"/>
<ellipse cx="858.2" cy="206.4" rx="1.4" ry="0.8" fill="#d5e6c8" opacity="0.85"/>
<ellipse cx="843.6" cy="200.2" rx="1.2" ry="0.7" fill="#d5e6c8" opacity="0.85"/>
<ellipse cx="856.0" cy="226.8" rx="1.4" ry="2.1" fill="#d5e6c8" opacity="0.85"/>
<ellipse cx="846.8" cy="202.1" rx="1.3" ry="0.9" fill="#d5e6c8" opacity="0.85"/>
<ellipse cx="866.2" cy="208.9" rx="2.0" ry="1.8" fill="#d5e6c8" opacity="0.85"/>
<ellipse cx="853.2" cy="213.1" rx="1.2" ry="1.3" fill="#d5e6c8" opacity="0.85"/>
<ellipse cx="883.5" cy="232.2" rx="1.3" ry="1.9" fill="#d5e6c8" opacity="0.85"/>
<ellipse cx="843.8" cy="214.3" rx="1.4" ry="1.1" fill="#d5e6c8" opacity="0.85"/>
<ellipse cx="860.3" cy="217.4" rx="1.7" ry="0.7" fill="#d5e6c8" opacity="0.85"/>
<ellipse cx="842.5" cy="231.2" rx="1.6" ry="0.9" fill="#d5e6c8" opacity="0.85"/>
<ellipse cx="846.1" cy="202.5" rx="1.9" ry="1.7" fill="#d5e6c8" opacity="0.85"/>
<ellipse cx="857.6" cy="224.0" rx="1.2" ry="1.8" fill="#d5e6c8" opacity="0.85"/>
<ellipse cx="834.7" cy="224.2" rx="2.2" ry="1.0" fill="#d5e6c8" opacity="0.85"/>
<ellipse cx="845.5" cy="229.8" rx="1.1" ry="0.8" fill="#d5e6c8" opacity="0.85"/>
<ellipse cx="876.0" cy="218.6" rx="1.7" ry="1.9" fill="#d5e6c8" opacity="0.85"/>
<ellipse cx="865.5" cy="212.9" rx="1.8" ry="2.1" fill="#d5e6c8" opacity="0.85"/>
<ellipse cx="856.0" cy="239.9" rx="1.8" ry="2.1" fill="#d5e6c8" opacity="0.85"/>
<ellipse cx="859.2" cy="206.0" rx="1.8" ry="0.8" fill="#d5e6c8" opacity="0.85"/>
<ellipse cx="833.3" cy="222.3" rx="0.8" ry="1.3" fill="#d5e6c8" opacity="0.85"/>
<ellipse cx="839.7" cy="232.2" rx="1.2" ry="0.9" fill="#d5e6c8" opacity="0.85"/>
<ellipse cx="832.7" cy="225.9" rx="1.0" ry="1.7" fill="#d5e6c8" opacity="0.85"/>
<ellipse cx="850.5" cy="222.4" rx="1.3" ry="1.3" fill="#d5e6c8" opacity="0.85"/>
<ellipse cx="864.4" cy="232.9" rx="1.9" ry="1.5" fill="#d5e6c8" opacity="0.85"/>
<ellipse cx="848.8" cy="211.6" rx="1.4" ry="1.2" fill="#d5e6c8" opacity="0.85"/>
<ellipse cx="867.5" cy="221.5" rx="0.8" ry="1.4" fill="#d5e6c8" opacity="0.85"/>
<ellipse cx="832.0" cy="205.4" rx="1.3" ry="1.1" fill="#d5e6c8" opacity="0.85"/>
<ellipse cx="867.0" cy="217.3" rx="2.2" ry="1.5" fill="#d5e6c8" opacity="0.85"/>
<ellipse cx="847.9" cy="239.7" rx="1.0" ry="1.4" fill="#d5e6c8" opacity="0.85"/>
<ellipse cx="815.2" cy="187.5" rx="1.3" ry="1.6" fill="#d5e6c8" opacity="0.85"/>
<ellipse cx="880.0" cy="204.9" rx="1.8" ry="1.6" fill="#d5e6c8" opacity="0.85"/>
<ellipse cx="833.6" cy="224.2" rx="1.2" ry="1.9" fill="#d5e6c8" opacity="0.85"/>
<ellipse cx="863.3" cy="203.8" rx="2.2" ry="0.8" fill="#d5e6c8" opacity="0.85"/>
<ellipse cx="864.6" cy="229.9" rx="1.2" ry="1.2" fill="#d5e6c8" opacity="0.85"/>
<ellipse cx="860.5" cy="213.6" rx="1.0" ry="1.0" fill="#d5e6c8" opacity="0.85"/>
<ellipse cx="844.2" cy="204.0" rx="0.7" ry="1.5" fill="#d5e6c8" opacity="0.85"/>
<ellipse cx="839.1" cy="222.6" rx="1.5" ry="1.7" fill="#d5e6c8" opacity="0.85"/>
<ellipse cx="825.1" cy="208.1" rx="1.7" ry="1.9" fill="#d5e6c8" opacity="0.85"/>
<ellipse cx="866.5" cy="212.1" rx="1.3" ry="2.0" fill="#d5e6c8" opacity="0.85"/>
<ellipse cx="838.5" cy="239.4" rx="1.9" ry="1.7" fill="#d5e6c8" opacity="0.85"/>
<ellipse cx="883.9" cy="208.0" rx="1.0" ry="1.6" fill="#d5e6c8" opacity="0.85"/>
<ellipse cx="826.0" cy="216.3" rx="1.3" ry="1.1" fill="#d5e6c8" opacity="0.85"/>
<ellipse cx="849.9" cy="194.4" rx="1.1" ry="1.1" fill="#d5e6c8" opacity="0.85"/>
<ellipse cx="844.7" cy="224.3" rx="1.6" ry="0.9" fill="#d5e6c8" opacity="0.85"/>
<ellipse cx="856.5" cy="217.4" rx="0.9" ry="1.8" fill="#d5e6c8" opacity="0.85"/>
<ellipse cx="865.5" cy="226.9" rx="2.0" ry="1.4" fill="#d5e6c8" opacity="0.85"/>
<ellipse cx="869.6" cy="243.5" rx="2.2" ry="0.8" fill="#d5e6c8" opacity="0.85"/>
<ellipse cx="849.5" cy="234.8" rx="2.1" ry="1.3" fill="#d5e6c8" opacity="0.85"/>
<ellipse cx="847.0" cy="202.6" rx="1.9" ry="1.2" fill="#d5e6c8" opacity="0.85"/>
<ellipse cx="834.2" cy="239.3" rx="2.1" ry="1.9" fill="#d5e6c8" opacity="0.85"/>
<ellipse cx="832.2" cy="207.8" rx="1.9" ry="1.6" fill="#d5e6c8" opacity="0.85"/>
<ellipse cx="866.3" cy="188.8" rx="0.9" ry="1.3" fill="#d5e6c8" opacity="0.85"/>
<ellipse cx="843.4" cy="204.4" rx="1.0" ry="0.7" fill="#d5e6c8" opacity="0.85"/>
<ellipse cx="811.8" cy="194.7" rx="2.3" ry="0.9" fill="#d5e6c8" opacity="0.85"/>
<ellipse cx="842.6" cy="198.9" rx="1.8" ry="1.3" fill="#d5e6c8" opacity="0.85"/>
<ellipse cx="901.1" cy="194.7" rx="0.8" ry="1.8" fill="#d5e6c8" opacity="0.85"/>
<ellipse cx="813.7" cy="221.9" rx="1.2" ry="1.8" fill="#d5e6c8" opacity="0.85"/>
<ellipse cx="816.0" cy="219.8" rx="1.3" ry="0.7" fill="#d5e6c8" opacity="0.85"/>
<ellipse cx="803.1" cy="217.2" rx="1.3" ry="1.2" fill="#d5e6c8" opacity="0.85"/>
<ellipse cx="816.8" cy="203.1" rx="1.2" ry="1.3" fill="#d5e6c8" opacity="0.85"/>
<ellipse cx="801.9" cy="209.3" rx="2.4" ry="1.3" fill="#d5e6c8" opacity="0.85"/>
<ellipse cx="808.5" cy="209.0" rx="2.1" ry="0.9" fill="#d5e6c8" opacity="0.85"/>
<ellipse cx="813.7" cy="224.0" rx="2.3" ry="1.1" fill="#d5e6c8" opacity="0.85"/>
<ellipse cx="808.0" cy="220.3" rx="1.3" ry="0.7" fill="#d5e6c8" opacity="0.85"/>
<ellipse cx="807.9" cy="217.9" rx="1.8" ry="1.1" fill="#d5e6c8" opacity="0.85"/>
<ellipse cx="813.3" cy="230.6" rx="1.3" ry="1.1" fill="#d5e6c8" opacity="0.85"/>
<ellipse cx="814.8" cy="221.1" rx="2.2" ry="1.2" fill="#d5e6c8" opacity="0.85"/>
<ellipse cx="816.5" cy="222.8" rx="1.5" ry="2.2" fill="#d5e6c8" opacity="0.85"/>
<ellipse cx="816.8" cy="237.9" rx="1.5" ry="1.3" fill="#d5e6c8" opacity="0.85"/>
<ellipse cx="814.8" cy="211.2" rx="0.8" ry="1.5" fill="#d5e6c8" opacity="0.85"/>
<ellipse cx="805.8" cy="209.1" rx="1.2" ry="2.1" fill="#d5e6c8" opacity="0.85"/>
<ellipse cx="829.0" cy="197.4" rx="1.5" ry="2.0" fill="#d5e6c8" opacity="0.85"/>
<ellipse cx="811.2" cy="214.3" rx="0.7" ry="1.0" fill="#d5e6c8" opacity="0.85"/>
<ellipse cx="814.3" cy="222.5" rx="1.3" ry="1.8" fill="#d5e6c8" opacity="0.85"/>
<ellipse cx="808.5" cy="230.4" rx="0.7" ry="1.0" fill="#d5e6c8" opacity="0.85"/>
<ellipse cx="813.2" cy="219.6" rx="1.6" ry="1.9" fill="#d5e6c8" opacity="0.85"/>
<ellipse cx="815.4" cy="205.3" rx="1.4" ry="1.9" fill="#d5e6c8" opacity="0.85"/>
<ellipse cx="818.4" cy="205.9" rx="2.4" ry="0.9" fill="#d5e6c8" opacity="0.85"/>
<ellipse cx="819.7" cy="217.1" rx="1.9" ry="1.1" fill="#d5e6c8" opacity="0.85"/>
<ellipse cx="813.5" cy="218.9" rx="1.7" ry="1.0" fill="#d5e6c8" opacity="0.85"/>
<ellipse cx="806.1" cy="225.8" rx="1.8" ry="1.9" fill="#d5e6c8" opacity="0.85"/>
<ellipse cx="804.5" cy="230.0" rx="1.3" ry="1.1" fill="#d5e6c8" opacity="0.85"/>
<ellipse cx="817.8" cy="215.4" rx="0.9" ry="1.2" fill="#d5e6c8" opacity="0.85"/>
<ellipse cx="811.7" cy="213.6" rx="2.0" ry="1.5" fill="#d5e6c8" opacity="0.85"/>
<ellipse cx="809.9" cy="214.7" rx="0.9" ry="0.9" fill="#d5e6c8" opacity="0.85"/>
<ellipse cx="807.0" cy="228.0" rx="0.7" ry="1.5" fill="#d5e6c8" opacity="0.85"/>
<ellipse cx="886.3" cy="242.0" rx="1.6" ry="2.1" fill="#d5e6c8" opacity="0.85"/>
<ellipse cx="901.9" cy="247.9" rx="1.2" ry="1.8" fill="#d5e6c8" opacity="0.85"/>
<ellipse cx="922.6" cy="247.5" rx="1.4" ry="2.1" fill="#d5e6c8" opacity="0.85"/>
<ellipse cx="897.3" cy="244.0" rx="1.9" ry="1.0" fill="#d5e6c8" opacity="0.85"/>
<ellipse cx="892.4" cy="246.0" rx="2.3" ry="1.2" fill="#d5e6c8" opacity="0.85"/>
<ellipse cx="899.6" cy="243.4" rx="2.4" ry="0.9" fill="#d5e6c8" opacity="0.85"/>
<ellipse cx="887.3" cy="237.1" rx="1.8" ry="1.0" fill="#d5e6c8" opacity="0.85"/>
<ellipse cx="876.3" cy="234.4" rx="2.2" ry="1.6" fill="#d5e6c8" opacity="0.85"/>
<ellipse cx="879.5" cy="239.8" rx="0.9" ry="2.0" fill="#d5e6c8" opacity="0.85"/>
<ellipse cx="890.1" cy="235.9" rx="1.8" ry="1.3" fill="#d5e6c8" opacity="0.85"/>
<ellipse cx="888.5" cy="241.9" rx="1.7" ry="1.6" fill="#d5e6c8" opacity="0.85"/>
<ellipse cx="891.9" cy="239.9" rx="1.8" ry="1.4" fill="#d5e6c8" opacity="0.85"/>
<ellipse cx="881.6" cy="237.0" rx="2.3" ry="0.9" fill="#d5e6c8" opacity="0.85"/>
<ellipse cx="858.0" cy="242.5" rx="2.0" ry="1.2" fill="#d5e6c8" opacity="0.85"/>
<ellipse cx="892.0" cy="228.0" rx="1.4" ry="2.0" fill="#d5e6c8" opacity="0.85"/>
<ellipse cx="920.5" cy="248.7" rx="1.5" ry="1.1" fill="#d5e6c8" opacity="0.85"/>
<ellipse cx="904.3" cy="235.1" rx="2.3" ry="1.9" fill="#d5e6c8" opacity="0.85"/>
<ellipse cx="899.2" cy="235.4" rx="2.4" ry="0.8" fill="#d5e6c8" opacity="0.85"/>
<ellipse cx="908.0" cy="235.4" rx="1.1" ry="1.9" fill="#d5e6c8" opacity="0.85"/>
<ellipse cx="880.7" cy="241.4" rx="2.2" ry="1.0" fill="#d5e6c8" opacity="0.85"/>
<ellipse cx="865.6" cy="105.6" rx="0.8" ry="1.5" fill="#d5e6c8" opacity="0.85"/>
<ellipse cx="874.5" cy="95.5" rx="1.1" ry="1.9" fill="#d5e6c8" opacity="0.85"/>
<ellipse cx="887.5" cy="94.6" rx="1.6" ry="2.1" fill="#d5e6c8" opacity="0.85"/>
<ellipse cx="872.8" cy="97.8" rx="1.3" ry="0.9" fill="#d5e6c8" opacity="0.85"/>
<ellipse cx="884.9" cy="100.8" rx="2.2" ry="2.0" fill="#d5e6c8" opacity="0.85"/>
<ellipse cx="877.8" cy="101.7" rx="1.4" ry="2.0" fill="#d5e6c8" opacity="0.85"/>
<ellipse cx="843.4" cy="94.2" rx="0.8" ry="2.2" fill="#d5e6c8" opacity="0.85"/>
<ellipse cx="876.3" cy="105.4" rx="2.2" ry="1.8" fill="#d5e6c8" opacity="0.85"/>
<ellipse cx="878.1" cy="105.6" rx="1.4" ry="0.7" fill="#d5e6c8" opacity="0.85"/>
<ellipse cx="862.3" cy="102.9" rx="1.8" ry="1.1" fill="#d5e6c8" opacity="0.85"/>
<ellipse cx="849.5" cy="96.3" rx="1.0" ry="0.9" fill="#d5e6c8" opacity="0.85"/>
<ellipse cx="863.5" cy="95.8" rx="0.9" ry="0.9" fill="#d5e6c8" opacity="0.85"/>
<ellipse cx="891.3" cy="98.0" rx="1.3" ry="1.0" fill="#d5e6c8" opacity="0.85"/>
<ellipse cx="895.6" cy="99.8" rx="2.0" ry="1.2" fill="#d5e6c8" opacity="0.85"/>
<ellipse cx="863.7" cy="103.8" rx="0.9" ry="1.6" fill="#d5e6c8" opacity="0.85"/>
<ellipse cx="842.5" cy="103.4" rx="1.4" ry="1.4" fill="#d5e6c8" opacity="0.85"/>
<ellipse cx="830.3" cy="99.6" rx="1.3" ry="1.8" fill="#d5e6c8" opacity="0.85"/>
<ellipse cx="872.1" cy="105.2" rx="1.2" ry="2.0" fill="#d5e6c8" opacity="0.85"/>
<ellipse cx="862.6" cy="107.6" rx="1.9" ry="1.4" fill="#d5e6c8" opacity="0.85"/>
<ellipse cx="885.1" cy="98.4" rx="2.0" ry="1.6" fill="#d5e6c8" opacity="0.85"/>
<ellipse cx="864.2" cy="100.5" rx="1.4" ry="1.1" fill="#d5e6c8" opacity="0.85"/>
<ellipse cx="831.4" cy="103.6" rx="1.2" ry="1.7" fill="#d5e6c8" opacity="0.85"/>
<ellipse cx="864.1" cy="97.4" rx="1.4" ry="0.9" fill="#d5e6c8" opacity="0.85"/>
<ellipse cx="880.0" cy="98.1" rx="1.4" ry="1.2" fill="#d5e6c8" opacity="0.85"/>
<ellipse cx="883.9" cy="93.0" rx="1.7" ry="1.5" fill="#d5e6c8" opacity="0.85"/>
<ellipse cx="1197.2" cy="212.4" rx="0.9" ry="1.2" fill="#d5e6c8" opacity="0.85"/>
<ellipse cx="1143.9" cy="209.1" rx="1.8" ry="1.2" fill="#d5e6c8" opacity="0.85"/>
<ellipse cx="1201.6" cy="131.1" rx="0.7" ry="1.6" fill="#d5e6c8" opacity="0.85"/>
<ellipse cx="1147.6" cy="180.5" rx="1.5" ry="1.2" fill="#d5e6c8" opacity="0.85"/>
<ellipse cx="1152.9" cy="139.0" rx="2.3" ry="2.2" fill="#d5e6c8" opacity="0.85"/>
<ellipse cx="1183.7" cy="173.6" rx="2.1" ry="1.7" fill="#d5e6c8" opacity="0.85"/>
<ellipse cx="1145.3" cy="75.6" rx="0.8" ry="1.4" fill="#d5e6c8" opacity="0.85"/>
<ellipse cx="1142.8" cy="200.5" rx="1.1" ry="2.2" fill="#d5e6c8" opacity="0.85"/>
<ellipse cx="1169.5" cy="202.9" rx="0.9" ry="1.3" fill="#d5e6c8" opacity="0.85"/>
<ellipse cx="1164.6" cy="162.5" rx="1.0" ry="1.7" fill="#d5e6c8" opacity="0.85"/>
<ellipse cx="1143.0" cy="140.5" rx="1.1" ry="1.9" fill="#d5e6c8" opacity="0.85"/>
<ellipse cx="1161.1" cy="123.5" rx="0.9" ry="1.4" fill="#d5e6c8" opacity="0.85"/>
<ellipse cx="1201.8" cy="180.9" rx="2.3" ry="2.0" fill="#d5e6c8" opacity="0.85"/>
<ellipse cx="1182.2" cy="179.2" rx="1.6" ry="1.5" fill="#d5e6c8" opacity="0.85"/>
<ellipse cx="1190.2" cy="209.1" rx="1.2" ry="1.5" fill="#d5e6c8" opacity="0.85"/>
<ellipse cx="1182.1" cy="202.4" rx="0.9" ry="0.8" fill="#d5e6c8" opacity="0.85"/>
<ellipse cx="1149.5" cy="173.1" rx="2.0" ry="1.1" fill="#d5e6c8" opacity="0.85"/>
<ellipse cx="1159.7" cy="180.2" rx="1.1" ry="1.4" fill="#d5e6c8" opacity="0.85"/>
<ellipse cx="1145.7" cy="163.1" rx="2.1" ry="0.9" fill="#d5e6c8" opacity="0.85"/>
<ellipse cx="1171.4" cy="160.9" rx="2.3" ry="1.5" fill="#d5e6c8" opacity="0.85"/>
<ellipse cx="1143.6" cy="197.9" rx="2.2" ry="2.1" fill="#d5e6c8" opacity="0.85"/>
<ellipse cx="1162.7" cy="177.3" rx="1.0" ry="1.9" fill="#d5e6c8" opacity="0.85"/>
<ellipse cx="1162.1" cy="127.9" rx="1.0" ry="1.5" fill="#d5e6c8" opacity="0.85"/>
<ellipse cx="1173.9" cy="177.6" rx="1.2" ry="2.1" fill="#d5e6c8" opacity="0.85"/>
<ellipse cx="1142.5" cy="129.5" rx="0.8" ry="1.3" fill="#d5e6c8" opacity="0.85"/>
<ellipse cx="1177.8" cy="186.0" rx="0.9" ry="2.1" fill="#d5e6c8" opacity="0.85"/>
<ellipse cx="1154.7" cy="205.6" rx="1.8" ry="2.0" fill="#d5e6c8" opacity="0.85"/>
<ellipse cx="1187.8" cy="162.2" rx="1.6" ry="2.1" fill="#d5e6c8" opacity="0.85"/>
<ellipse cx="1152.6" cy="190.6" rx="2.0" ry="1.1" fill="#d5e6c8" opacity="0.85"/>
<ellipse cx="1151.7" cy="198.5" rx="1.5" ry="1.2" fill="#d5e6c8" opacity="0.85"/>
<ellipse cx="1146.5" cy="188.9" rx="0.8" ry="2.0" fill="#d5e6c8" opacity="0.85"/>
<ellipse cx="1186.2" cy="188.9" rx="1.6" ry="1.3" fill="#d5e6c8" opacity="0.85"/>
<ellipse cx="1166.5" cy="188.5" rx="1.3" ry="1.2" fill="#d5e6c8" opacity="0.85"/>
<ellipse cx="1151.6" cy="177.2" rx="2.0" ry="1.4" fill="#d5e6c8" opacity="0.85"/>
<ellipse cx="1184.0" cy="176.7" rx="2.3" ry="0.7" fill="#d5e6c8" opacity="0.85"/>
<ellipse cx="1125.4" cy="132.7" rx="1.3" ry="1.6" fill="#d5e6c8" opacity="0.85"/>
<ellipse cx="1154.3" cy="193.6" rx="1.7" ry="1.6" fill="#d5e6c8" opacity="0.85"/>
<ellipse cx="1156.3" cy="207.3" rx="1.6" ry="1.8" fill="#d5e6c8" opacity="0.85"/>
<ellipse cx="1172.8" cy="179.3" rx="1.1" ry="1.1" fill="#d5e6c8" opacity="0.85"/>
<ellipse cx="1170.6" cy="144.7" rx="2.2" ry="1.3" fill="#d5e6c8" opacity="0.85"/>
<ellipse cx="1158.7" cy="219.1" rx="0.8" ry="2.2" fill="#d5e6c8" opacity="0.85"/>
<ellipse cx="1173.2" cy="151.7" rx="1.2" ry="1.9" fill="#d5e6c8" opacity="0.85"/>
<ellipse cx="1171.4" cy="133.2" rx="0.8" ry="1.8" fill="#d5e6c8" opacity="0.85"/>
<ellipse cx="1190.0" cy="187.5" rx="1.6" ry="2.1" fill="#d5e6c8" opacity="0.85"/>
<ellipse cx="1162.4" cy="170.1" rx="2.3" ry="1.8" fill="#d5e6c8" opacity="0.85"/>
<ellipse cx="1163.3" cy="173.5" rx="2.0" ry="1.3" fill="#d5e6c8" opacity="0.85"/>
<ellipse cx="1142.1" cy="97.2" rx="2.3" ry="0.8" fill="#d5e6c8" opacity="0.85"/>
<ellipse cx="1168.9" cy="143.3" rx="2.0" ry="1.3" fill="#d5e6c8" opacity="0.85"/>
<ellipse cx="1146.1" cy="185.4" rx="0.9" ry="1.2" fill="#d5e6c8" opacity="0.85"/>
<ellipse cx="1164.3" cy="163.5" rx="0.9" ry="2.0" fill="#d5e6c8" opacity="0.85"/>
<ellipse cx="1153.2" cy="142.3" rx="0.9" ry="0.9" fill="#d5e6c8" opacity="0.85"/>
<ellipse cx="1147.9" cy="244.2" rx="1.7" ry="2.1" fill="#d5e6c8" opacity="0.85"/>
<ellipse cx="1169.7" cy="205.1" rx="1.6" ry="2.0" fill="#d5e6c8" opacity="0.85"/>
<ellipse cx="1192.1" cy="217.7" rx="1.5" ry="0.7" fill="#d5e6c8" opacity="0.85"/>
<ellipse cx="1148.5" cy="187.1" rx="1.8" ry="2.1" fill="#d5e6c8" opacity="0.85"/>
<ellipse cx="1136.5" cy="176.8" rx="1.4" ry="1.9" fill="#d5e6c8" opacity="0.85"/>
<ellipse cx="1189.3" cy="205.3" rx="1.0" ry="1.6" fill="#d5e6c8" opacity="0.85"/>
<ellipse cx="1170.1" cy="201.4" rx="1.0" ry="1.2" fill="#d5e6c8" opacity="0.85"/>
<ellipse cx="1146.0" cy="155.3" rx="1.4" ry="1.6" fill="#d5e6c8" opacity="0.85"/>
<ellipse cx="1174.6" cy="151.4" rx="1.7" ry="1.4" fill="#d5e6c8" opacity="0.85"/>
<ellipse cx="1181.5" cy="171.7" rx="1.9" ry="1.1" fill="#d5e6c8" opacity="0.85"/>
<ellipse cx="1162.9" cy="223.5" rx="1.7" ry="1.1" fill="#d5e6c8" opacity="0.85"/>
<ellipse cx="1197.0" cy="197.0" rx="1.3" ry="1.8" fill="#d5e6c8" opacity="0.85"/>
<ellipse cx="1141.4" cy="192.1" rx="1.7" ry="2.2" fill="#d5e6c8" opacity="0.85"/>
<ellipse cx="1182.4" cy="157.2" rx="1.5" ry="1.0" fill="#d5e6c8" opacity="0.85"/>
<ellipse cx="1165.2" cy="161.1" rx="1.2" ry="2.0" fill="#d5e6c8" opacity="0.85"/>
<ellipse cx="1193.2" cy="185.2" rx="1.7" ry="1.5" fill="#d5e6c8" opacity="0.85"/>
<ellipse cx="1159.7" cy="189.9" rx="2.3" ry="1.8" fill="#d5e6c8" opacity="0.85"/>
<ellipse cx="1167.9" cy="162.2" rx="2.0" ry="1.0" fill="#d5e6c8" opacity="0.85"/>
<ellipse cx="1172.2" cy="210.3" rx="1.7" ry="0.9" fill="#d5e6c8" opacity="0.85"/>
<ellipse cx="1167.3" cy="135.5" rx="2.2" ry="2.1" fill="#d5e6c8" opacity="0.85"/>
<ellipse cx="1158.4" cy="148.5" rx="2.3" ry="1.8" fill="#d5e6c8" opacity="0.85"/>
<ellipse cx="1155.6" cy="232.3" rx="1.9" ry="1.1" fill="#d5e6c8" opacity="0.85"/>
<ellipse cx="1165.0" cy="181.1" rx="1.6" ry="1.1" fill="#d5e6c8" opacity="0.85"/>
<ellipse cx="1161.2" cy="197.1" rx="0.9" ry="1.4" fill="#d5e6c8" opacity="0.85"/>
<ellipse cx="1162.8" cy="199.3" rx="1.2" ry="1.5" fill="#d5e6c8" opacity="0.85"/>
<ellipse cx="1172.7" cy="162.4" rx="2.2" ry="2.0" fill="#d5e6c8" opacity="0.85"/>
<ellipse cx="1146.9" cy="151.2" rx="1.9" ry="1.5" fill="#d5e6c8" opacity="0.85"/>
<ellipse cx="1142.5" cy="118.2" rx="2.0" ry="1.1" fill="#d5e6c8" opacity="0.85"/>
<ellipse cx="1206.3" cy="198.6" rx="1.3" ry="1.9" fill="#d5e6c8" opacity="0.85"/>
<ellipse cx="1167.1" cy="207.8" rx="1.3" ry="1.8" fill="#d5e6c8" opacity="0.85"/>
<ellipse cx="1185.8" cy="162.6" rx="1.7" ry="1.2" fill="#d5e6c8" opacity="0.85"/>
<ellipse cx="1170.1" cy="247.9" rx="0.9" ry="2.1" fill="#d5e6c8" opacity="0.85"/>
<ellipse cx="1161.0" cy="165.3" rx="2.2" ry="0.9" fill="#d5e6c8" opacity="0.85"/>
<ellipse cx="1156.4" cy="168.9" rx="2.4" ry="1.2" fill="#d5e6c8" opacity="0.85"/>
<ellipse cx="1169.6" cy="167.3" rx="1.8" ry="0.8" fill="#d5e6c8" opacity="0.85"/>
<ellipse cx="1188.9" cy="182.2" rx="2.4" ry="1.7" fill="#d5e6c8" opacity="0.85"/>
<ellipse cx="1185.1" cy="133.5" rx="1.6" ry="0.8" fill="#d5e6c8" opacity="0.85"/>
<ellipse cx="1153.2" cy="171.8" rx="1.6" ry="1.2" fill="#d5e6c8" opacity="0.85"/>
<ellipse cx="1152.6" cy="175.1" rx="1.9" ry="1.3" fill="#d5e6c8" opacity="0.85"/>
<ellipse cx="1157.5" cy="176.1" rx="1.5" ry="1.5" fill="#d5e6c8" opacity="0.85"/>
<ellipse cx="1188.6" cy="168.4" rx="0.9" ry="1.2" fill="#d5e6c8" opacity="0.85"/>
<ellipse cx="1150.1" cy="215.1" rx="2.3" ry="2.2" fill="#d5e6c8" opacity="0.85"/>
<ellipse cx="1205.4" cy="153.9" rx="2.2" ry="2.1" fill="#d5e6c8" opacity="0.85"/>
<ellipse cx="1186.5" cy="179.4" rx="1.7" ry="1.7" fill="#d5e6c8" opacity="0.85"/>
<ellipse cx="1145.5" cy="148.1" rx="2.3" ry="0.8" fill="#d5e6c8" opacity="0.85"/>
<ellipse cx="1118.1" cy="165.8" rx="0.8" ry="0.9" fill="#d5e6c8" opacity="0.85"/>
<ellipse cx="1196.9" cy="119.8" rx="0.7" ry="0.7" fill="#d5e6c8" opacity="0.85"/>
<ellipse cx="1178.7" cy="134.8" rx="1.6" ry="1.6" fill="#d5e6c8" opacity="0.85"/>
<ellipse cx="1166.6" cy="120.6" rx="0.7" ry="0.8" fill="#d5e6c8" opacity="0.85"/>
<ellipse cx="1178.9" cy="96.5" rx="2.1" ry="1.3" fill="#d5e6c8" opacity="0.85"/>
<ellipse cx="1156.2" cy="198.8" rx="0.7" ry="1.9" fill="#d5e6c8" opacity="0.85"/>
<ellipse cx="1163.1" cy="214.7" rx="1.6" ry="1.2" fill="#d5e6c8" opacity="0.85"/>
<ellipse cx="1155.7" cy="145.6" rx="1.1" ry="2.0" fill="#d5e6c8" opacity="0.85"/>
<ellipse cx="1169.8" cy="190.3" rx="1.1" ry="1.4" fill="#d5e6c8" opacity="0.85"/>
<ellipse cx="1168.5" cy="148.6" rx="1.1" ry="1.7" fill="#d5e6c8" opacity="0.85"/>
<ellipse cx="1163.5" cy="211.4" rx="1.1" ry="2.0" fill="#d5e6c8" opacity="0.85"/>
<ellipse cx="1170.4" cy="195.0" rx="1.2" ry="1.2" fill="#d5e6c8" opacity="0.85"/>
<ellipse cx="1160.9" cy="130.6" rx="2.0" ry="1.5" fill="#d5e6c8" opacity="0.85"/>
<ellipse cx="1192.9" cy="199.1" rx="1.1" ry="1.0" fill="#d5e6c8" opacity="0.85"/>
<ellipse cx="1016.7" cy="200.9" rx="1.3" ry="1.2" fill="#d5e6c8" opacity="0.85"/>
<ellipse cx="1103.1" cy="148.0" rx="1.4" ry="0.9" fill="#d5e6c8" opacity="0.85"/>
<ellipse cx="1067.2" cy="146.8" rx="1.3" ry="1.9" fill="#d5e6c8" opacity="0.85"/>
<ellipse cx="1050.0" cy="184.4" rx="1.7" ry="1.8" fill="#d5e6c8" opacity="0.85"/>
<ellipse cx="1029.6" cy="179.7" rx="0.7" ry="1.4" fill="#d5e6c8" opacity="0.85"/>
<ellipse cx="1055.5" cy="179.2" rx="2.3" ry="0.9" fill="#d5e6c8" opacity="0.85"/>
<ellipse cx="1069.4" cy="207.9" rx="2.3" ry="2.1" fill="#d5e6c8" opacity="0.85"/>
<ellipse cx="1039.0" cy="207.3" rx="0.9" ry="1.8" fill="#d5e6c8" opacity="0.85"/>
<ellipse cx="1070.3" cy="171.3" rx="0.9" ry="1.7" fill="#d5e6c8" opacity="0.85"/>
<ellipse cx="1079.9" cy="156.9" rx="2.3" ry="1.4" fill="#d5e6c8" opacity="0.85"/>
<ellipse cx="1054.1" cy="181.1" rx="1.2" ry="2.1" fill="#d5e6c8" opacity="0.85"/>
<ellipse cx="1069.6" cy="179.6" rx="1.3" ry="0.8" fill="#d5e6c8" opacity="0.85"/>
<ellipse cx="1056.3" cy="184.9" rx="0.9" ry="1.5" fill="#d5e6c8" opacity="0.85"/>
<ellipse cx="1039.1" cy="169.6" rx="2.0" ry="1.5" fill="#d5e6c8" opacity="0.85"/>
<ellipse cx="1066.5" cy="172.8" rx="1.1" ry="0.8" fill="#d5e6c8" opacity="0.85"/>
<ellipse cx="1049.7" cy="201.2" rx="2.3" ry="1.5" fill="#d5e6c8" opacity="0.85"/>
<ellipse cx="1068.0" cy="187.6" rx="1.7" ry="1.1" fill="#d5e6c8" opacity="0.85"/>
<ellipse cx="1071.9" cy="131.9" rx="1.5" ry="1.6" fill="#d5e6c8" opacity="0.85"/>
<ellipse cx="1070.6" cy="159.6" rx="1.0" ry="2.1" fill="#d5e6c8" opacity="0.85"/>
<ellipse cx="1063.7" cy="174.5" rx="2.0" ry="1.3" fill="#d5e6c8" opacity="0.85"/>
<ellipse cx="1069.4" cy="178.2" rx="1.0" ry="1.8" fill="#d5e6c8" opacity="0.85"/>
<ellipse cx="1060.8" cy="178.2" rx="1.1" ry="1.9" fill="#d5e6c8" opacity="0.85"/>
<ellipse cx="1035.8" cy="175.1" rx="1.5" ry="1.0" fill="#d5e6c8" opacity="0.85"/>
<ellipse cx="1074.1" cy="176.4" rx="0.8" ry="1.1" fill="#d5e6c8" opacity="0.85"/>
<ellipse cx="1048.2" cy="164.1" rx="1.5" ry="1.6" fill="#d5e6c8" opacity="0.85"/>
<ellipse cx="1053.6" cy="189.3" rx="2.2" ry="1.6" fill="#d5e6c8" opacity="0.85"/>
<ellipse cx="1042.0" cy="185.4" rx="1.5" ry="1.2" fill="#d5e6c8" opacity="0.85"/>
<ellipse cx="1070.4" cy="168.7" rx="2.3" ry="2.0" fill="#d5e6c8" opacity="0.85"/>
<ellipse cx="1067.3" cy="168.3" rx="1.6" ry="2.2" fill="#d5e6c8" opacity="0.85"/>
<ellipse cx="1057.5" cy="184.9" rx="1.9" ry="1.1" fill="#d5e6c8" opacity="0.85"/>
<ellipse cx="1051.6" cy="170.1" rx="2.3" ry="1.1" fill="#d5e6c8" opacity="0.85"/>
<ellipse cx="1080.8" cy="189.5" rx="1.3" ry="1.5" fill="#d5e6c8" opacity="0.85"/>
<ellipse cx="1022.3" cy="175.7" rx="1.6" ry="1.3" fill="#d5e6c8" opacity="0.85"/>
<ellipse cx="1079.5" cy="175.2" rx="1.2" ry="1.6" fill="#d5e6c8" opacity="0.85"/>
<ellipse cx="1047.5" cy="161.3" rx="0.9" ry="1.4" fill="#d5e6c8" opacity="0.85"/>
<ellipse cx="1036.3" cy="177.7" rx="2.3" ry="1.1" fill="#d5e6c8" opacity="0.85"/>
<ellipse cx="1053.4" cy="177.5" rx="2.1" ry="1.1" fill="#d5e6c8" opacity="0.85"/>
<ellipse cx="1074.2" cy="148.8" rx="1.1" ry="2.1" fill="#d5e6c8" opacity="0.85"/>
<ellipse cx="1042.4" cy="174.6" rx="1.6" ry="2.1" fill="#d5e6c8" opacity="0.85"/>
<ellipse cx="1040.9" cy="176.2" rx="1.2" ry="2.0" fill="#d5e6c8" opacity="0.85"/>
<ellipse cx="1044.7" cy="174.7" rx="1.0" ry="1.0" fill="#d5e6c8" opacity="0.85"/>
<ellipse cx="1075.2" cy="149.0" rx="2.4" ry="2.1" fill="#d5e6c8" opacity="0.85"/>
<ellipse cx="1048.2" cy="147.7" rx="1.9" ry="1.9" fill="#d5e6c8" opacity="0.85"/>
<ellipse cx="1063.3" cy="165.2" rx="2.1" ry="1.2" fill="#d5e6c8" opacity="0.85"/>
<ellipse cx="1061.4" cy="212.4" rx="0.7" ry="1.5" fill="#d5e6c8" opacity="0.85"/>
<ellipse cx="1037.2" cy="159.8" rx="1.7" ry="2.1" fill="#d5e6c8" opacity="0.85"/>
<ellipse cx="1055.5" cy="146.1" rx="0.8" ry="1.7" fill="#d5e6c8" opacity="0.85"/>
<ellipse cx="1062.6" cy="162.0" rx="2.2" ry="1.2" fill="#d5e6c8" opacity="0.85"/>
<ellipse cx="1049.8" cy="159.4" rx="2.0" ry="2.2" fill="#d5e6c8" opacity="0.85"/>
<ellipse cx="1042.0" cy="147.6" rx="1.9" ry="0.8" fill="#d5e6c8" opacity="0.85"/>
<ellipse cx="1054.2" cy="141.6" rx="2.0" ry="2.0" fill="#d5e6c8" opacity="0.85"/>
<ellipse cx="1027.6" cy="143.3" rx="1.8" ry="1.4" fill="#d5e6c8" opacity="0.85"/>
<ellipse cx="1039.4" cy="154.1" rx="0.7" ry="0.9" fill="#d5e6c8" opacity="0.85"/>
<ellipse cx="1046.6" cy="145.4" rx="1.8" ry="1.9" fill="#d5e6c8" opacity="0.85"/>
<ellipse cx="1041.7" cy="142.5" rx="1.2" ry="1.1" fill="#d5e6c8" opacity="0.85"/>
<ellipse cx="1049.4" cy="158.9" rx="1.9" ry="2.1" fill="#d5e6c8" opacity="0.85"/>
<ellipse cx="1036.1" cy="163.3" rx="2.2" ry="1.1" fill="#d5e6c8" opacity="0.85"/>
<ellipse cx="1055.6" cy="147.2" rx="2.3" ry="1.9" fill="#d5e6c8" opacity="0.85"/>
<ellipse cx="1041.8" cy="154.7" rx="1.6" ry="1.4" fill="#d5e6c8" opacity="0.85"/>
<ellipse cx="1060.5" cy="152.9" rx="1.6" ry="1.4" fill="#d5e6c8" opacity="0.85"/>
<ellipse cx="1134.7" cy="229.9" rx="1.0" ry="1.6" fill="#d5e6c8" opacity="0.85"/>
<ellipse cx="1135.6" cy="240.9" rx="0.8" ry="0.8" fill="#d5e6c8" opacity="0.85"/>
<ellipse cx="1126.0" cy="241.4" rx="2.3" ry="1.7" fill="#d5e6c8" opacity="0.85"/>
<ellipse cx="1124.5" cy="238.5" rx="1.1" ry="1.4" fill="#d5e6c8" opacity="0.85"/>
<ellipse cx="1140.9" cy="234.1" rx="1.4" ry="1.7" fill="#d5e6c8" opacity="0.85"/>
<ellipse cx="1136.2" cy="226.5" rx="1.8" ry="2.1" fill="#d5e6c8" opacity="0.85"/>
<ellipse cx="1142.5" cy="232.1" rx="1.6" ry="2.2" fill="#d5e6c8" opacity="0.85"/>
<ellipse cx="1127.3" cy="234.3" rx="2.0" ry="0.8" fill="#d5e6c8" opacity="0.85"/>
<ellipse cx="1143.9" cy="241.8" rx="1.2" ry="1.8" fill="#d5e6c8" opacity="0.85"/>
<ellipse cx="1133.5" cy="229.2" rx="2.0" ry="1.7" fill="#d5e6c8" opacity="0.85"/>
<ellipse cx="1131.4" cy="227.9" rx="1.4" ry="0.9" fill="#d5e6c8" opacity="0.85"/>
<ellipse cx="1105.5" cy="237.6" rx="2.2" ry="0.8" fill="#d5e6c8" opacity="0.85"/>
<ellipse cx="1143.6" cy="237.3" rx="1.9" ry="1.4" fill="#d5e6c8" opacity="0.85"/>
<ellipse cx="1143.8" cy="240.1" rx="1.7" ry="1.8" fill="#d5e6c8" opacity="0.85"/>
<ellipse cx="1120.7" cy="240.5" rx="1.9" ry="1.6" fill="#d5e6c8" opacity="0.85"/>
<ellipse cx="1153.1" cy="238.0" rx="0.9" ry="0.8" fill="#d5e6c8" opacity="0.85"/>
<ellipse cx="1132.8" cy="235.2" rx="0.8" ry="1.3" fill="#d5e6c8" opacity="0.85"/>
<ellipse cx="1129.4" cy="235.6" rx="2.3" ry="2.0" fill="#d5e6c8" opacity="0.85"/>
<ellipse cx="1119.1" cy="235.7" rx="1.2" ry="2.2" fill="#d5e6c8" opacity="0.85"/>
<ellipse cx="1142.5" cy="238.9" rx="1.1" ry="2.0" fill="#d5e6c8" opacity="0.85"/>
<ellipse cx="961.3" cy="107.7" rx="1.4" ry="2.0" fill="#d5e6c8" opacity="0.85"/>
<ellipse cx="973.9" cy="117.4" rx="1.9" ry="1.4" fill="#d5e6c8" opacity="0.85"/>
<ellipse cx="965.5" cy="112.3" rx="1.5" ry="1.2" fill="#d5e6c8" opacity="0.85"/>
<ellipse cx="965.2" cy="104.1" rx="1.2" ry="1.9" fill="#d5e6c8" opacity="0.85"/>
<ellipse cx="960.5" cy="109.7" rx="2.2" ry="1.4" fill="#d5e6c8" opacity="0.85"/>
<ellipse cx="954.7" cy="116.0" rx="2.4" ry="1.9" fill="#d5e6c8" opacity="0.85"/>
<ellipse cx="958.8" cy="112.6" rx="2.0" ry="1.1" fill="#d5e6c8" opacity="0.85"/>
<ellipse cx="969.7" cy="95.1" rx="1.8" ry="1.7" fill="#d5e6c8" opacity="0.85"/>
<ellipse cx="957.2" cy="111.1" rx="1.1" ry="1.9" fill="#d5e6c8" opacity="0.85"/>
<ellipse cx="938.8" cy="104.4" rx="1.3" ry="1.8" fill="#d5e6c8" opacity="0.85"/>
<ellipse cx="1026.3" cy="248.6" rx="2.0" ry="1.1" fill="#d5e6c8" opacity="0.85"/>
<ellipse cx="1013.7" cy="245.5" rx="1.4" ry="2.2" fill="#d5e6c8" opacity="0.85"/>
<ellipse cx="1023.8" cy="259.1" rx="0.8" ry="1.6" fill="#d5e6c8" opacity="0.85"/>
<ellipse cx="1024.6" cy="238.8" rx="1.4" ry="1.6" fill="#d5e6c8" opacity="0.85"/>
<ellipse cx="1014.8" cy="239.2" rx="2.0" ry="1.6" fill="#d5e6c8" opacity="0.85"/>
<ellipse cx="1017.9" cy="256.3" rx="1.7" ry="1.5" fill="#d5e6c8" opacity="0.85"/>
<ellipse cx="1022.3" cy="247.8" rx="2.0" ry="1.2" fill="#d5e6c8" opacity="0.85"/>
<ellipse cx="1015.1" cy="235.1" rx="1.2" ry="1.6" fill="#d5e6c8" opacity="0.85"/>
<ellipse cx="1008.8" cy="246.9" rx="1.0" ry="1.6" fill="#d5e6c8" opacity="0.85"/>
<ellipse cx="1027.3" cy="243.1" rx="1.2" ry="1.9" fill="#d5e6c8" opacity="0.85"/>
<ellipse cx="1014.1" cy="249.4" rx="1.7" ry="1.4" fill="#d5e6c8" opacity="0.85"/>
<ellipse cx="993.8" cy="244.9" rx="1.7" ry="2.1" fill="#d5e6c8" opacity="0.85"/>
<ellipse cx="920.5" cy="265.2" rx="0.8" ry="1.2" fill="#d5e6c8" opacity="0.85"/>
<ellipse cx="924.9" cy="250.4" rx="2.1" ry="1.3" fill="#d5e6c8" opacity="0.85"/>
<ellipse cx="928.7" cy="263.0" rx="1.6" ry="0.7" fill="#d5e6c8" opacity="0.85"/>
<ellipse cx="920.4" cy="263.5" rx="1.0" ry="1.2" fill="#d5e6c8" opacity="0.85"/>
<ellipse cx="945.1" cy="249.1" rx="1.1" ry="1.0" fill="#d5e6c8" opacity="0.85"/>
<ellipse cx="932.9" cy="259.5" rx="2.0" ry="1.8" fill="#d5e6c8" opacity="0.85"/>
<ellipse cx="929.0" cy="264.2" rx="1.9" ry="0.7" fill="#d5e6c8" opacity="0.85"/>
<ellipse cx="937.8" cy="248.4" rx="1.1" ry="1.8" fill="#d5e6c8" opacity="0.85"/>
<ellipse cx="927.3" cy="253.4" rx="2.2" ry="1.0" fill="#d5e6c8" opacity="0.85"/>
<ellipse cx="922.0" cy="258.8" rx="1.5" ry="1.9" fill="#d5e6c8" opacity="0.85"/>
<ellipse cx="1073.5" cy="101.9" rx="2.4" ry="1.0" fill="#d5e6c8" opacity="0.85"/>
<ellipse cx="1093.2" cy="112.3" rx="1.0" ry="2.1" fill="#d5e6c8" opacity="0.85"/>
<ellipse cx="1082.2" cy="109.8" rx="1.4" ry="1.9" fill="#d5e6c8" opacity="0.85"/>
<ellipse cx="1107.3" cy="100.9" rx="1.0" ry="1.2" fill="#d5e6c8" opacity="0.85"/>
<ellipse cx="1087.5" cy="101.4" rx="2.2" ry="2.0" fill="#d5e6c8" opacity="0.85"/>
<ellipse cx="1091.9" cy="110.0" rx="1.1" ry="1.8" fill="#d5e6c8" opacity="0.85"/>
<ellipse cx="1109.7" cy="107.4" rx="0.8" ry="2.0" fill="#d5e6c8" opacity="0.85"/>
<ellipse cx="1073.0" cy="103.1" rx="0.9" ry="0.8" fill="#d5e6c8" opacity="0.85"/>
<ellipse cx="1066.7" cy="117.3" rx="1.7" ry="2.0" fill="#d5e6c8" opacity="0.85"/>
<ellipse cx="1095.7" cy="105.9" rx="0.7" ry="1.7" fill="#d5e6c8" opacity="0.85"/>
<path d="M806 94 L811 94 L813 97 L816 99 L819 104 L817 107 L814 105 L811 101 L808 98 Z" fill="#8ec8ee"/>
<path d="M795 237 L802 238 L810 250 L818 262 L826 274 L832 284 L810 284 L804 272 L798 262 L795 255 Z" fill="#8ec8ee"/>
<path d="M990 284 L997 278 L1010 270 L1028 263 L1048 257 L1080 252 L1110 250.5 L1130 252.5 L1142 257 L1148 265 L1151 275 L1153 284 Z" fill="#8ec8ee"/>
<path d="M1172 284 L1172 236 L1182 222 L1194 208 L1200 204 L1200 284 Z" fill="#8ec8ee"/>
<path d="M1150 94 L1162 94 L1158 97 L1152 97 Z" fill="#8ec8ee"/>
<path d="M829.8 94 V102.2 H931.4 V117.3 H1017" stroke="#9a9896" stroke-width="0.9" stroke-dasharray="3 1.6" fill="none"/>
<path d="M909.7 94 V102.2" stroke="#9a9896" stroke-width="0.9" stroke-dasharray="3 1.6" fill="none"/>
<path d="M852.9 102.2 V239.3" stroke="#9a9896" stroke-width="0.9" stroke-dasharray="3 1.6" fill="none"/>
<path d="M795 161.1 H1017" stroke="#9a9896" stroke-width="0.9" stroke-dasharray="3 1.6" fill="none"/>
<path d="M931.4 117.3 V161.1" stroke="#9a9896" stroke-width="0.9" stroke-dasharray="3 1.6" fill="none"/>
<path d="M921.2 161.1 V168 H955.3 V186 C965 190 990 196 1017 197" stroke="#9a9896" stroke-width="0.9" stroke-dasharray="3 1.6" fill="none"/>
<path d="M920.6 168 V230.2 H882.7" stroke="#9a9896" stroke-width="0.9" stroke-dasharray="3 1.6" fill="none"/>
<path d="M1017 117.6 V254" stroke="#9a9896" stroke-width="0.9" stroke-dasharray="3 1.6" fill="none"/>
<path d="M1002.8 108.8 H1052 L1050 100 L1055 94" stroke="#9a9896" stroke-width="0.9" stroke-dasharray="3 1.6" fill="none"/>
<path d="M1052 108.8 C1055 120 1060 130 1064 145 C1068 160 1071 168 1071.6 168.2" stroke="#9a9896" stroke-width="0.9" stroke-dasharray="3 1.6" fill="none"/>
<path d="M1017 168.2 H1071.6 C1072 180 1068 200 1060 216.8 H1022.2 V255" stroke="#9a9896" stroke-width="0.9" stroke-dasharray="3 1.6" fill="none"/>
<path d="M1098 94 V150 C1095 158 1085 162 1075 166" stroke="#9a9896" stroke-width="0.9" stroke-dasharray="3 1.6" fill="none"/>
<path d="M1129 94 V130 C1140 130 1150 138 1160 140" stroke="#9a9896" stroke-width="0.9" stroke-dasharray="3 1.6" fill="none"/>
<path d="M1098 150 C1108 142 1118 134 1129 130" stroke="#9a9896" stroke-width="0.9" stroke-dasharray="3 1.6" fill="none"/>
<path d="M1160 140 C1165 150 1170 160 1178 168" stroke="#9a9896" stroke-width="0.9" stroke-dasharray="3 1.6" fill="none"/>
<path d="M1071.6 168 H1180" stroke="#9a9896" stroke-width="0.9" stroke-dasharray="3 1.6" fill="none"/>
<path d="M1088.4 188 V247.6" stroke="#9a9896" stroke-width="0.9" stroke-dasharray="3 1.6" fill="none"/>
<path d="M1119.3 168 L1125.5 243.2 H1159.9" stroke="#9a9896" stroke-width="0.9" stroke-dasharray="3 1.6" fill="none"/>
<path d="M1160 168 L1175 200 L1198 206" stroke="#9a9896" stroke-width="0.9" stroke-dasharray="3 1.6" fill="none"/>
<path d="M1054.9 216.8 C1058 230 1062 240 1064 250" stroke="#9a9896" stroke-width="0.9" stroke-dasharray="3 1.6" fill="none"/>
<path d="M795 227.3 L830.7 239.6 L861.4 239.6 L861.4 233.6 L880.2 233.6 L899.8 248.2 L903.2 260.1 L918.6 270.3 L927.1 259.2 L939 259.2 L956.1 284" stroke="#a3a19f" stroke-width="1.6" fill="none"/>
<circle cx="898.5" cy="121.4" r="2.1" fill="#fff" stroke="#4a4846" stroke-width="1"/>
<circle cx="1016.4" cy="130" r="2.1" fill="#fff" stroke="#4a4846" stroke-width="1"/>
<circle cx="983.5" cy="181.6" r="2.1" fill="#fff" stroke="#4a4846" stroke-width="1"/>
<circle cx="879.3" cy="188.4" r="2.1" fill="#fff" stroke="#4a4846" stroke-width="1"/>
<circle cx="817.4" cy="210.6" r="2.1" fill="#fff" stroke="#4a4846" stroke-width="1"/>
<circle cx="881.4" cy="233.6" r="2.1" fill="#fff" stroke="#4a4846" stroke-width="1"/>
<circle cx="991.5" cy="219.5" r="2.1" fill="#fff" stroke="#4a4846" stroke-width="1"/>
<circle cx="972.4" cy="264.4" r="2.1" fill="#fff" stroke="#4a4846" stroke-width="1"/>
<circle cx="830.4" cy="269.5" r="2.1" fill="#fff" stroke="#4a4846" stroke-width="1"/>
<circle cx="1001.4" cy="98.5" r="2.1" fill="#fff" stroke="#4a4846" stroke-width="1"/>
<circle cx="1112.6" cy="120.8" r="2.1" fill="#fff" stroke="#4a4846" stroke-width="1"/>
<circle cx="1105.5" cy="173.5" r="2.1" fill="#fff" stroke="#4a4846" stroke-width="1"/>
<circle cx="1068.5" cy="187.3" r="2.1" fill="#fff" stroke="#4a4846" stroke-width="1"/>
<circle cx="1174.9" cy="185.5" r="2.1" fill="#fff" stroke="#4a4846" stroke-width="1"/>
<circle cx="1132.5" cy="206.5" r="2.1" fill="#fff" stroke="#4a4846" stroke-width="1"/>
<circle cx="1007.2" cy="260.5" r="2.1" fill="#fff" stroke="#4a4846" stroke-width="1"/>
<circle cx="1163.4" cy="252.4" r="2.1" fill="#fff" stroke="#4a4846" stroke-width="1"/>
</svg>
</div>
<div style="position:absolute;left:795px;top:94.2px;width:405px;height:189.5px;overflow:hidden;">
<div class="t" style="left:21.200000000000045px;top:22.54px;font-size:10px;line-height:10px;font-weight:700;color:#3e3c3a;letter-spacing:2.2px;-webkit-text-stroke:0.35px #3e3c3a;text-shadow:0 0 2px #fff,0 0 2px #fff;">UT</div>
<div class="t" style="left:109px;top:23.43px;font-size:10px;line-height:10px;font-weight:700;color:#3e3c3a;letter-spacing:1.6px;-webkit-text-stroke:0.35px #3e3c3a;text-shadow:0 0 2px #fff,0 0 2px #fff;">Denver</div>
<div class="t" style="left:88.60000000000002px;top:30.23px;font-size:10px;line-height:10px;font-weight:700;color:#3e3c3a;letter-spacing:1.5px;-webkit-text-stroke:0.35px #3e3c3a;text-shadow:0 0 2px #fff,0 0 2px #fff;">CO</div>
<div class="t" style="left:143.20000000000005px;top:32.13px;font-size:10px;line-height:10px;font-weight:700;color:#3e3c3a;letter-spacing:1.6px;-webkit-text-stroke:0.35px #3e3c3a;text-shadow:0 0 2px #fff,0 0 2px #fff;">Kansas City</div>
<div class="t" style="left:60.60000000000002px;top:49.20px;font-size:13px;line-height:13px;font-weight:700;color:#7b5453;letter-spacing:6.3px;-webkit-text-stroke:0.35px #7b5453;text-shadow:0 0 2px #fff,0 0 2px #fff;">UNITED STATES</div>
<div class="t" style="left:171.70000000000005px;top:58.94px;font-size:10px;line-height:10px;font-weight:700;color:#3e3c3a;letter-spacing:1.2px;-webkit-text-stroke:0.35px #3e3c3a;text-shadow:0 0 2px #fff,0 0 2px #fff;">KS</div>
<div class="t" style="left:92.5px;top:84.13px;font-size:10px;line-height:10px;font-weight:700;color:#3e3c3a;letter-spacing:1.6px;-webkit-text-stroke:0.35px #3e3c3a;text-shadow:0 0 2px #fff,0 0 2px #fff;">Oklahoma City</div>
<div class="t" style="left:183.29999999999995px;top:90.13px;font-size:10px;line-height:10px;font-weight:700;color:#3e3c3a;letter-spacing:1.2px;-webkit-text-stroke:0.35px #3e3c3a;text-shadow:0 0 2px #fff,0 0 2px #fff;">OK</div>
<div class="t" style="left:93.70000000000005px;top:92.13px;font-size:10px;line-height:10px;font-weight:700;color:#3e3c3a;letter-spacing:1.5px;-webkit-text-stroke:0.35px #3e3c3a;text-shadow:0 0 2px #fff,0 0 2px #fff;">NM</div>
<div class="t" style="left:19.100000000000023px;top:98.13px;font-size:10px;line-height:10px;font-weight:700;color:#3e3c3a;letter-spacing:2.5px;-webkit-text-stroke:0.35px #3e3c3a;text-shadow:0 0 2px #fff,0 0 2px #fff;">AZ</div>
<div class="t" style="left:46.39999999999998px;top:99.83px;font-size:10px;line-height:10px;font-weight:700;color:#3e3c3a;letter-spacing:1.5px;-webkit-text-stroke:0.35px #3e3c3a;text-shadow:0 0 2px #fff,0 0 2px #fff;">Albuquerque</div>
<div class="t" style="left:28.899999999999977px;top:112.63px;font-size:10px;line-height:10px;font-weight:700;color:#3e3c3a;letter-spacing:1.6px;-webkit-text-stroke:0.35px #3e3c3a;text-shadow:0 0 2px #fff,0 0 2px #fff;">Phoenix</div>
<div class="t" style="left:92.5px;top:135.73px;font-size:10px;line-height:10px;font-weight:700;color:#3e3c3a;letter-spacing:1.5px;-webkit-text-stroke:0.35px #3e3c3a;text-shadow:0 0 2px #fff,0 0 2px #fff;">Juárez</div>
<div class="t" style="left:154.29999999999995px;top:137.44px;font-size:10px;line-height:10px;font-weight:700;color:#3e3c3a;letter-spacing:2.5px;-webkit-text-stroke:0.35px #3e3c3a;text-shadow:0 0 2px #fff,0 0 2px #fff;">TX</div>
<div class="t" style="left:202.5px;top:121.53px;font-size:10px;line-height:10px;font-weight:700;color:#3e3c3a;letter-spacing:1.6px;-webkit-text-stroke:0.35px #3e3c3a;text-shadow:0 0 2px #fff,0 0 2px #fff;">Dallas</div>
<div class="t" style="left:96.29999999999995px;top:166.44px;font-size:10px;line-height:10px;font-weight:700;color:#3e3c3a;letter-spacing:1.6px;-webkit-text-stroke:0.35px #3e3c3a;text-shadow:0 0 2px #fff,0 0 2px #fff;">San Antonio</div>
<div class="t" style="left:39.10000000000002px;top:178.34px;font-size:10px;line-height:10px;font-weight:700;color:#3e3c3a;letter-spacing:1.5px;-webkit-text-stroke:0.35px #3e3c3a;text-shadow:0 0 2px #fff,0 0 2px #fff;">Hermosillo</div>
<div class="t" style="left:212.79999999999995px;top:0.84px;font-size:10px;line-height:10px;font-weight:700;color:#3e3c3a;letter-spacing:1.9px;-webkit-text-stroke:0.35px #3e3c3a;text-shadow:0 0 2px #fff,0 0 2px #fff;">Omaha</div>
<div class="t" style="left:276.5999999999999px;top:4.43px;font-size:10px;line-height:10px;font-weight:700;color:#3e3c3a;letter-spacing:1.5px;-webkit-text-stroke:0.35px #3e3c3a;text-shadow:0 0 2px #fff,0 0 2px #fff;">IL</div>
<div class="t" style="left:311.9000000000001px;top:9.54px;font-size:10px;line-height:10px;font-weight:700;color:#3e3c3a;letter-spacing:1.5px;-webkit-text-stroke:0.35px #3e3c3a;text-shadow:0 0 2px #fff,0 0 2px #fff;">IN</div>
<div class="t" style="left:348.5999999999999px;top:9.63px;font-size:10px;line-height:10px;font-weight:700;color:#3e3c3a;letter-spacing:1.5px;-webkit-text-stroke:0.35px #3e3c3a;text-shadow:0 0 2px #fff,0 0 2px #fff;">O</div>
<div class="t" style="left:149px;top:-5.37px;font-size:10px;line-height:10px;font-weight:700;color:#3e3c3a;letter-spacing:1.5px;-webkit-text-stroke:0.35px #3e3c3a;text-shadow:0 0 2px #fff,0 0 2px #fff;">NE</div>
<div class="t" style="left:235.20000000000005px;top:22.43px;font-size:10px;line-height:10px;font-weight:700;color:#3e3c3a;letter-spacing:1.6px;-webkit-text-stroke:0.35px #3e3c3a;text-shadow:0 0 2px #fff,0 0 2px #fff;">Indianapolis</div>
<div class="t" style="left:236px;top:40.03px;font-size:10px;line-height:10px;font-weight:700;color:#3e3c3a;letter-spacing:2px;-webkit-text-stroke:0.35px #3e3c3a;text-shadow:0 0 2px #fff,0 0 2px #fff;">MO</div>
<div class="t" style="left:321.5999999999999px;top:54.13px;font-size:10px;line-height:10px;font-weight:700;color:#3e3c3a;letter-spacing:0.8px;-webkit-text-stroke:0.35px #3e3c3a;text-shadow:0 0 2px #fff,0 0 2px #fff;">KY</div>
<div class="t" style="left:281px;top:75.33px;font-size:10px;line-height:10px;font-weight:700;color:#3e3c3a;letter-spacing:1.5px;-webkit-text-stroke:0.35px #3e3c3a;text-shadow:0 0 2px #fff,0 0 2px #fff;">TN</div>
<div class="t" style="left:316.29999999999995px;top:75.33px;font-size:10px;line-height:10px;font-weight:700;color:#3e3c3a;letter-spacing:1.5px;-webkit-text-stroke:0.35px #3e3c3a;text-shadow:0 0 2px #fff,0 0 2px #fff;">Nashville</div>
<div class="t" style="left:385.70000000000005px;top:78.33px;font-size:10px;line-height:10px;font-weight:700;color:#3e3c3a;letter-spacing:1.5px;-webkit-text-stroke:0.35px #3e3c3a;text-shadow:0 0 2px #fff,0 0 2px #fff;">NC</div>
<div class="t" style="left:279.29999999999995px;top:87.53px;font-size:10px;line-height:10px;font-weight:700;color:#3e3c3a;letter-spacing:1.6px;-webkit-text-stroke:0.35px #3e3c3a;text-shadow:0 0 2px #fff,0 0 2px #fff;">Memphis</div>
<div class="t" style="left:236.4000000000001px;top:89.83px;font-size:10px;line-height:10px;font-weight:700;color:#3e3c3a;letter-spacing:2.5px;-webkit-text-stroke:0.35px #3e3c3a;text-shadow:0 0 2px #fff,0 0 2px #fff;">AR</div>
<div class="t" style="left:385px;top:90.63px;font-size:10px;line-height:10px;font-weight:700;color:#3e3c3a;letter-spacing:1.5px;-webkit-text-stroke:0.35px #3e3c3a;text-shadow:0 0 2px #fff,0 0 2px #fff;">Char</div>
<div class="t" style="left:369.29999999999995px;top:98.13px;font-size:10px;line-height:10px;font-weight:700;color:#3e3c3a;letter-spacing:1.2px;-webkit-text-stroke:0.35px #3e3c3a;text-shadow:0 0 2px #fff,0 0 2px #fff;">SC</div>
<div class="t" style="left:344px;top:108.33px;font-size:10px;line-height:10px;font-weight:700;color:#3e3c3a;letter-spacing:1.6px;-webkit-text-stroke:0.35px #3e3c3a;text-shadow:0 0 2px #fff,0 0 2px #fff;">Atlanta</div>
<div class="t" style="left:342.79999999999995px;top:118.94px;font-size:10px;line-height:10px;font-weight:700;color:#3e3c3a;letter-spacing:2px;-webkit-text-stroke:0.35px #3e3c3a;text-shadow:0 0 2px #fff,0 0 2px #fff;">GA</div>
<div class="t" style="left:268.20000000000005px;top:120.13px;font-size:10px;line-height:10px;font-weight:700;color:#3e3c3a;letter-spacing:1.5px;-webkit-text-stroke:0.35px #3e3c3a;text-shadow:0 0 2px #fff,0 0 2px #fff;">MS</div>
<div class="t" style="left:302.79999999999995px;top:120.13px;font-size:10px;line-height:10px;font-weight:700;color:#3e3c3a;letter-spacing:2.5px;-webkit-text-stroke:0.35px #3e3c3a;text-shadow:0 0 2px #fff,0 0 2px #fff;">AL</div>
<div class="t" style="left:236.4000000000001px;top:140.94px;font-size:10px;line-height:10px;font-weight:700;color:#3e3c3a;letter-spacing:1.5px;-webkit-text-stroke:0.35px #3e3c3a;text-shadow:0 0 2px #fff,0 0 2px #fff;">LA</div>
<div class="t" style="left:218.39999999999998px;top:162.14px;font-size:10px;line-height:10px;font-weight:700;color:#3e3c3a;letter-spacing:1.6px;-webkit-text-stroke:0.35px #3e3c3a;text-shadow:0 0 2px #fff,0 0 2px #fff;">Houston</div>
<div class="t" style="left:377px;top:154.14px;font-size:10px;line-height:10px;font-weight:700;color:#3e3c3a;letter-spacing:1.6px;-webkit-text-stroke:0.35px #3e3c3a;text-shadow:0 0 2px #fff,0 0 2px #fff;">Jacks</div>
<div class="t" style="left:395px;top:48.63px;font-size:10px;line-height:10px;font-weight:700;color:#3e3c3a;letter-spacing:1px;-webkit-text-stroke:0.35px #3e3c3a;text-shadow:0 0 2px #fff,0 0 2px #fff;">W</div>
<div class="t" style="left:394px;top:23.63px;font-size:10px;line-height:10px;font-weight:700;color:#3e3c3a;letter-spacing:1px;-webkit-text-stroke:0.35px #3e3c3a;text-shadow:0 0 2px #fff,0 0 2px #fff;">b</div>
<div class="t" style="left:355px;top:185.64px;font-size:10px;line-height:10px;font-weight:700;color:#3e3c3a;letter-spacing:1.5px;-webkit-text-stroke:0.35px #3e3c3a;text-shadow:0 0 2px #fff,0 0 2px #fff;">FL</div>
<div class="t" style="left:244.5px;top:148.32px;font-size:12.5px;line-height:12.5px;font-weight:700;color:#161513;letter-spacing:0.5px;text-shadow:0 0 2px #fff;">500 mi</div>
<div class="r" style="left:241px;top:161.3px;width:101px;height:2px;background:#161513;"></div>
<div class="r" style="left:241px;top:166.3px;width:125px;height:2px;background:#161513;"></div>
<div class="t" style="left:244.5px;top:170.02px;font-size:12.5px;line-height:12.5px;font-weight:700;color:#161513;letter-spacing:0.6px;text-shadow:0 0 2px #fff;">1000 km</div>
<svg style="position:absolute;left:0;top:0" width="405" height="190" viewBox="795 94.2 405 189.5">
<defs><filter id="sh" x="-30%" y="-30%" width="160%" height="160%"><feDropShadow dx="1" dy="1.5" stdDeviation="1.5" flood-color="#000" flood-opacity="0.35"/></filter></defs>
<circle cx="1170" cy="122.7" r="23.5" fill="#fff" stroke="#c8c6c4" stroke-width="0.8" filter="url(#sh)"/>
<path d="M1155 114.5 V107 H1162.5 M1178 107 H1185.5 V114.5 M1185.5 130.5 V138 H1178 M1162.5 138 H1155 V130.5" stroke="#4a4846" stroke-width="2.2" fill="none"/>
<path d="M1163.2 110.8 L1170 104 L1176.8 110.8 M1163.2 134.5 L1170 141 L1176.8 134.5 M1158 116 L1151.5 122.7 L1158 129.4 M1182 116 L1189 122.7 L1182 129.4" stroke="#4a4846" stroke-width="2.2" fill="none"/>
<circle cx="1170" cy="122.7" r="3.3" fill="none" stroke="#8a8886" stroke-width="0.9"/><circle cx="1170" cy="122.7" r="1.2" fill="#8a8886"/>
<rect x="1167.7" y="168" width="5.2" height="104" fill="#fff" stroke="#b0aeac" stroke-width="0.8" filter="url(#sh)"/>
<rect x="1162.6" y="154.6" width="16" height="15.5" rx="3" fill="#fff" stroke="#b8b6b4" stroke-width="0.8" filter="url(#sh)"/>
<path d="M1170.6 157.5 V167.5 M1165.6 162.4 H1175.6" stroke="#3a3836" stroke-width="2"/>
<rect x="1162.6" y="268" width="16" height="11.5" rx="3" fill="#fff" stroke="#b8b6b4" stroke-width="0.8" filter="url(#sh)"/>
<path d="M1165.6 273.6 H1175.6" stroke="#3a3836" stroke-width="2"/>
<rect x="1189.5" y="269.3" width="11" height="10" fill="#d8cf9c" stroke="#8a8470" stroke-width="0.8"/><rect x="1191.5" y="271.5" width="7" height="4" fill="#5a5040"/><rect x="1192.5" y="272.3" width="2" height="2" fill="#e05030"/><rect x="1195.5" y="272.3" width="2" height="2" fill="#50a050"/>
</svg>
</div>
<div class="r" style="left:794px;top:284px;width:413px;height:1.2px;background:#868686;"></div>
<div class="r" style="left:794px;top:285.2px;width:413px;height:5.3px;background:#ffffff;"></div>
<div class="r" style="left:794px;top:290.5px;width:413px;height:1.2px;background:#868686;"></div>
<div class="r" style="left:794px;top:290.5px;width:1px;height:408px;background:#868686;"></div>
<div class="r" style="left:795px;top:291.7px;width:412px;height:406.3px;background:#faf9f8;"></div>
<div class="r" style="left:795px;top:315.8px;width:412px;height:1.2px;background:#868686;"></div>
<div class="r" style="left:795px;top:345px;width:412px;height:1.2px;background:#868686;"></div>
<div class="t" style="left:800.5px;top:296.87px;font-size:11.5px;line-height:11.5px;font-weight:700;color:#161513;">Stops</div>
<svg class="s" style="left:1112px;top:302.5px;" width="7" height="7" viewBox="0 0 7 7"><path d="M0.9 3.2 L3.5 0.7 L6.1 3.2 M0.9 6.4 L3.5 3.9 L6.1 6.4" stroke="#161513" stroke-width="1.05" fill="none"/></svg>
<svg class="s" style="left:1152px;top:299.2px;" width="14" height="14" viewBox="0 0 14 14"><path d="M0.65 7.7 V2.2 A1.55 1.55 0 0 1 2.2 0.65 H12 A1.55 1.55 0 0 1 13.55 2.2 V11.8 A1.55 1.55 0 0 1 12 13.35 H6.2" stroke="#161513" stroke-width="1.3" fill="none"/><path d="M1.6 11.9 L8.2 5.5" stroke="#161513" stroke-width="1.8"/><path d="M3.8 5.4 H8.2 V10" stroke="#161513" stroke-width="1.8" fill="none"/></svg>
<svg class="s" style="left:1186px;top:298.5px;" width="15" height="15" viewBox="0 0 15 15"><circle cx="7" cy="7.9" r="6.2" stroke="#161513" stroke-width="1.2" fill="none"/><rect x="6.1" y="6" width="1.9" height="5.8" fill="#161513"/><rect x="6.1" y="4.1" width="1.9" height="1.2" fill="#161513"/></svg>
<div class="t" style="left:808.3px;top:325.17px;font-size:11.5px;line-height:11.5px;font-weight:700;color:#161513;">Actions</div>
<svg class="s" style="left:863px;top:328.5px;" width="9" height="5" viewBox="0 0 9 5"><path d="M0 0 H9 L4.5 5 Z" fill="#161513"/></svg>
<div class="r" style="left:893.5px;top:320px;width:1px;height:21.5px;background:#dcdad8;"></div>
<div class="t" style="left:914px;top:325.17px;font-size:11.5px;line-height:11.5px;font-weight:700;color:#161513;">View</div>
<svg class="s" style="left:954px;top:328.5px;" width="9" height="5" viewBox="0 0 9 5"><path d="M0 0 H9 L4.5 5 Z" fill="#161513"/></svg>
<div class="r" style="left:984.5px;top:320px;width:1px;height:21.5px;background:#dcdad8;"></div>
<svg class="s" style="left:1006px;top:325px;" width="14" height="13" viewBox="0 0 14 13"><path d="M8.65 10.7 A5.3 5.3 0 1 1 11.2 5.2" stroke="#161513" stroke-width="1.5" fill="none"/><path d="M9.1 5.4 H13.5 L11.3 8.4 Z" fill="#161513"/></svg>
<svg class="s" style="left:1051.5px;top:323px;" width="12" height="15" viewBox="0 0 12 15"><path d="M3.6 7 V3.3 A2.7 2.7 0 0 1 9 3.3 V4.3" stroke="#161513" stroke-width="1.5" fill="none"/><rect x="0.75" y="7.25" width="10.5" height="7" fill="none" stroke="#161513" stroke-width="1.5"/><path d="M0.75 14 H11.25" stroke="#161513" stroke-width="1.2"/><path d="M4.5 10.6 H7.5" stroke="#161513" stroke-width="1.3"/></svg>
<div class="r" style="left:1086.5px;top:320px;width:1px;height:21.5px;background:#dcdad8;"></div>
<svg class="s" style="left:1108.5px;top:324px;" width="15" height="14" viewBox="0 0 15 14"><circle cx="9.6" cy="5" r="3.7" stroke="#161513" stroke-width="1.5" fill="none"/><path d="M9.6 5 L12 2.6" stroke="#161513" stroke-width="1.6"/><g transform="translate(7.1 7.6) rotate(45)"><rect x="-1.6" y="0" width="3.2" height="8" rx="1.6" fill="none" stroke="#161513" stroke-width="1.3"/></g></svg>
<div class="r" style="left:1143px;top:320px;width:1px;height:21.5px;background:#dcdad8;"></div>
<div class="r" style="left:1158.2px;top:317px;width:41.8px;height:28px;background:#fcfbfa;"></div>
<div class="r" style="left:1158.2px;top:317px;width:1px;height:28px;background:#e8e6e4;"></div>
<svg class="s" style="left:1171.5px;top:320.5px;" width="8" height="11" viewBox="0 0 8 11"><path d="M1.5 1 L6 5.5 L1.5 10" stroke="#161513" stroke-width="1.6" fill="none"/></svg>
<svg class="s" style="left:805px;top:367.5px;" width="15" height="15" viewBox="0 0 15 15"><rect x="0.5" y="0.5" width="14" height="14" fill="none" stroke="#3a3836" stroke-width="0.8" stroke-dasharray="1 1"/><rect x="2.25" y="2.25" width="10.5" height="10.5" rx="1.5" fill="#faf9f8" stroke="#3a3836" stroke-width="1.5"/></svg>
<svg class="s" style="left:859px;top:367.5px;" width="15" height="15" viewBox="0 0 15 15"><polygon points="7.50,-0.20 9.91,4.78 15.39,5.54 11.40,9.37 12.38,14.81 7.50,12.20 2.62,14.81 3.60,9.37 -0.39,5.54 5.09,4.78" fill="#161513"/></svg>
<div class="t" style="left:911px;top:369.57px;font-size:11.5px;line-height:11.5px;font-weight:700;color:#161513;">ID</div>
<svg class="s" style="left:935.5px;top:369px;" width="9" height="11" viewBox="0 0 9 11"><path d="M1.5 4 L4.5 1.2 L7.5 4 M1.5 7 L4.5 9.8 L7.5 7" stroke="#161513" stroke-width="1.3" fill="none"/></svg>
<div class="t" style="left:1051.2px;top:369.57px;font-size:11.5px;line-height:11.5px;font-weight:700;color:#161513;">Stop Num</div>
<svg class="s" style="left:1118.3px;top:369px;" width="9" height="11" viewBox="0 0 9 11"><path d="M1.5 4 L4.5 1.2 L7.5 4 M1.5 7 L4.5 9.8 L7.5 7" stroke="#161513" stroke-width="1.3" fill="none"/></svg>
<div style="position:absolute;left:1155px;top:360px;width:45px;height:30px;overflow:hidden;">
<div class="t" style="left:0.6px;top:10.07px;font-size:11.5px;line-height:11.5px;font-weight:700;color:#161513;">Location</div>
</div>
<div class="r" style="left:795px;top:403px;width:405px;height:1px;background:#e0dedc;"></div>
<div class="r" style="left:795px;top:424.35px;width:405px;height:1px;background:#e6e4e2;"></div>
<svg class="s" style="left:805.5px;top:408.3px;" width="13" height="13" viewBox="0 0 13 13"><rect x="0.75" y="0.75" width="11.5" height="11.5" rx="2" fill="none" stroke="#3a3836" stroke-width="1.5"/></svg>
<svg class="s" style="left:856.5px;top:407.0px;" width="15" height="15" viewBox="0 0 15 15"><polygon points="7.50,1.50 9.44,5.43 13.78,6.06 10.64,9.12 11.38,13.44 7.50,11.40 3.62,13.44 4.36,9.12 1.22,6.06 5.56,5.43" fill="none" stroke="#161513" stroke-width="1.6" stroke-linejoin="miter"/></svg>
<div class="t" style="left:911.8px;top:408.15px;font-size:11.75px;line-height:11.75px;font-weight:400;color:#1c6d8c;">OOTB.24843x1</div>
<div class="t" style="right:77px;top:407.94px;font-size:12px;line-height:12px;font-weight:400;color:#161513;">1</div>
<div style="position:absolute;left:1155px;top:403.5px;width:45px;height:20px;overflow:hidden;">
<div class="t" style="left:0.3px;top:4.44px;font-size:12px;line-height:12px;font-weight:400;color:#1c6d8c;">DC1</div>
</div>
<div class="r" style="left:795px;top:445.7px;width:405px;height:1px;background:#e6e4e2;"></div>
<svg class="s" style="left:805.5px;top:429.65000000000003px;" width="13" height="13" viewBox="0 0 13 13"><rect x="0.75" y="0.75" width="11.5" height="11.5" rx="2" fill="none" stroke="#3a3836" stroke-width="1.5"/></svg>
<svg class="s" style="left:856.5px;top:428.35px;" width="15" height="15" viewBox="0 0 15 15"><polygon points="7.50,1.50 9.44,5.43 13.78,6.06 10.64,9.12 11.38,13.44 7.50,11.40 3.62,13.44 4.36,9.12 1.22,6.06 5.56,5.43" fill="none" stroke="#161513" stroke-width="1.6" stroke-linejoin="miter"/></svg>
<div class="t" style="left:911.8px;top:429.50px;font-size:11.75px;line-height:11.75px;font-weight:400;color:#1c6d8c;">OOTB.24843x2</div>
<div class="t" style="right:77px;top:429.29px;font-size:12px;line-height:12px;font-weight:400;color:#161513;">2</div>
<div style="position:absolute;left:1155px;top:424.85px;width:45px;height:20px;overflow:hidden;">
<div class="t" style="left:0.3px;top:4.44px;font-size:12px;line-height:12px;font-weight:400;color:#1c6d8c;">90013_LOS</div>
</div>
<div class="r" style="left:795px;top:467.05px;width:405px;height:1px;background:#e6e4e2;"></div>
<svg class="s" style="left:805.5px;top:451.0px;" width="13" height="13" viewBox="0 0 13 13"><rect x="0.75" y="0.75" width="11.5" height="11.5" rx="2" fill="none" stroke="#3a3836" stroke-width="1.5"/></svg>
<svg class="s" style="left:856.5px;top:449.7px;" width="15" height="15" viewBox="0 0 15 15"><polygon points="7.50,1.50 9.44,5.43 13.78,6.06 10.64,9.12 11.38,13.44 7.50,11.40 3.62,13.44 4.36,9.12 1.22,6.06 5.56,5.43" fill="none" stroke="#161513" stroke-width="1.6" stroke-linejoin="miter"/></svg>
<div class="t" style="left:911.8px;top:450.85px;font-size:11.75px;line-height:11.75px;font-weight:400;color:#1c6d8c;">OOTB.24843x3</div>
<div class="t" style="right:77px;top:450.64px;font-size:12px;line-height:12px;font-weight:400;color:#161513;">3</div>
<div style="position:absolute;left:1155px;top:446.2px;width:45px;height:20px;overflow:hidden;">
<div class="t" style="left:0.3px;top:4.44px;font-size:12px;line-height:12px;font-weight:400;color:#1c6d8c;">90014_LOS</div>
</div>
<div class="r" style="left:795px;top:488.4px;width:405px;height:1px;background:#e6e4e2;"></div>
<svg class="s" style="left:805.5px;top:472.35px;" width="13" height="13" viewBox="0 0 13 13"><rect x="0.75" y="0.75" width="11.5" height="11.5" rx="2" fill="none" stroke="#3a3836" stroke-width="1.5"/></svg>
<svg class="s" style="left:856.5px;top:471.05px;" width="15" height="15" viewBox="0 0 15 15"><polygon points="7.50,1.50 9.44,5.43 13.78,6.06 10.64,9.12 11.38,13.44 7.50,11.40 3.62,13.44 4.36,9.12 1.22,6.06 5.56,5.43" fill="none" stroke="#161513" stroke-width="1.6" stroke-linejoin="miter"/></svg>
<div class="t" style="left:911.8px;top:472.20px;font-size:11.75px;line-height:11.75px;font-weight:400;color:#1c6d8c;">OOTB.24843x4</div>
<div class="t" style="right:77px;top:471.99px;font-size:12px;line-height:12px;font-weight:400;color:#161513;">4</div>
<div style="position:absolute;left:1155px;top:467.55px;width:45px;height:20px;overflow:hidden;">
<div class="t" style="left:0.3px;top:4.44px;font-size:12px;line-height:12px;font-weight:400;color:#1c6d8c;">90015_LOS</div>
</div>
<div class="r" style="left:795px;top:509.75px;width:405px;height:1px;background:#e6e4e2;"></div>
<svg class="s" style="left:805.5px;top:493.7px;" width="13" height="13" viewBox="0 0 13 13"><rect x="0.75" y="0.75" width="11.5" height="11.5" rx="2" fill="none" stroke="#3a3836" stroke-width="1.5"/></svg>
<svg class="s" style="left:856.5px;top:492.4px;" width="15" height="15" viewBox="0 0 15 15"><polygon points="7.50,1.50 9.44,5.43 13.78,6.06 10.64,9.12 11.38,13.44 7.50,11.40 3.62,13.44 4.36,9.12 1.22,6.06 5.56,5.43" fill="none" stroke="#161513" stroke-width="1.6" stroke-linejoin="miter"/></svg>
<div class="t" style="left:911.8px;top:493.55px;font-size:11.75px;line-height:11.75px;font-weight:400;color:#1c6d8c;">OOTB.24843x5</div>
<div class="t" style="right:77px;top:493.34px;font-size:12px;line-height:12px;font-weight:400;color:#161513;">5</div>
<div style="position:absolute;left:1155px;top:488.9px;width:45px;height:20px;overflow:hidden;">
<div class="t" style="left:0.3px;top:4.44px;font-size:12px;line-height:12px;font-weight:400;color:#1c6d8c;">90018_LOS</div>
</div>
<div class="r" style="left:795px;top:531.1px;width:405px;height:1px;background:#e6e4e2;"></div>
<svg class="s" style="left:805.5px;top:515.05px;" width="13" height="13" viewBox="0 0 13 13"><rect x="0.75" y="0.75" width="11.5" height="11.5" rx="2" fill="none" stroke="#3a3836" stroke-width="1.5"/></svg>
<svg class="s" style="left:856.5px;top:513.75px;" width="15" height="15" viewBox="0 0 15 15"><polygon points="7.50,1.50 9.44,5.43 13.78,6.06 10.64,9.12 11.38,13.44 7.50,11.40 3.62,13.44 4.36,9.12 1.22,6.06 5.56,5.43" fill="none" stroke="#161513" stroke-width="1.6" stroke-linejoin="miter"/></svg>
<div class="t" style="left:911.8px;top:514.90px;font-size:11.75px;line-height:11.75px;font-weight:400;color:#1c6d8c;">OOTB.24843x6</div>
<div class="t" style="right:77px;top:514.69px;font-size:12px;line-height:12px;font-weight:400;color:#161513;">6</div>
<div style="position:absolute;left:1155px;top:510.25px;width:45px;height:20px;overflow:hidden;">
<div class="t" style="left:0.3px;top:4.44px;font-size:12px;line-height:12px;font-weight:400;color:#1c6d8c;">90016_LOS</div>
</div>
<div class="r" style="left:795px;top:552.45px;width:405px;height:1px;background:#e6e4e2;"></div>
<svg class="s" style="left:805.5px;top:536.4px;" width="13" height="13" viewBox="0 0 13 13"><rect x="0.75" y="0.75" width="11.5" height="11.5" rx="2" fill="none" stroke="#3a3836" stroke-width="1.5"/></svg>
<svg class="s" style="left:856.5px;top:535.1px;" width="15" height="15" viewBox="0 0 15 15"><polygon points="7.50,1.50 9.44,5.43 13.78,6.06 10.64,9.12 11.38,13.44 7.50,11.40 3.62,13.44 4.36,9.12 1.22,6.06 5.56,5.43" fill="none" stroke="#161513" stroke-width="1.6" stroke-linejoin="miter"/></svg>
<div class="t" style="left:911.8px;top:536.25px;font-size:11.75px;line-height:11.75px;font-weight:400;color:#1c6d8c;">OOTB.24843x7</div>
<div class="t" style="right:77px;top:536.04px;font-size:12px;line-height:12px;font-weight:400;color:#161513;">7</div>
<div style="position:absolute;left:1155px;top:531.6px;width:45px;height:20px;overflow:hidden;">
<div class="t" style="left:0.3px;top:4.44px;font-size:12px;line-height:12px;font-weight:400;color:#1c6d8c;">90017_LOS</div>
</div>
<svg class="s" style="left:805.5px;top:557.75px;" width="13" height="13" viewBox="0 0 13 13"><rect x="0.75" y="0.75" width="11.5" height="11.5" rx="2" fill="none" stroke="#3a3836" stroke-width="1.5"/></svg>
<svg class="s" style="left:856.5px;top:556.45px;" width="15" height="15" viewBox="0 0 15 15"><polygon points="7.50,1.50 9.44,5.43 13.78,6.06 10.64,9.12 11.38,13.44 7.50,11.40 3.62,13.44 4.36,9.12 1.22,6.06 5.56,5.43" fill="none" stroke="#161513" stroke-width="1.6" stroke-linejoin="miter"/></svg>
<div class="t" style="left:911.8px;top:557.60px;font-size:11.75px;line-height:11.75px;font-weight:400;color:#1c6d8c;">OOTB.24843x8</div>
<div class="t" style="right:77px;top:557.39px;font-size:12px;line-height:12px;font-weight:400;color:#161513;">8</div>
<div style="position:absolute;left:1155px;top:552.95px;width:45px;height:20px;overflow:hidden;">
<div class="t" style="left:0.3px;top:4.44px;font-size:12px;line-height:12px;font-weight:400;color:#1c6d8c;">90012_LOS</div>
</div>
<div class="r" style="left:795px;top:574.0px;width:405px;height:2px;background:#dcdad8;"></div>
<div class="r" style="left:828px;top:576.0px;width:372px;height:16.5px;background:#f0efee;"></div>
<div class="t" style="left:911px;top:579.14px;font-size:12px;line-height:12px;font-weight:400;color:#161513;">Totals</div>
<div class="r" style="left:852.9px;top:345.8px;width:337.1px;height:58.2px;background:transparent;border:3px solid #e0141e;box-sizing:border-box;"></div>
<div class="r" style="left:787px;top:38px;width:1.2px;height:660px;background:#868686;"></div>
<div class="r" style="left:793.8px;top:38px;width:1.2px;height:660px;background:#868686;"></div>
<div class="r" style="left:1200px;top:0px;width:3.3px;height:698px;background:#cac8c6;"></div>
<div class="r" style="left:1203.3px;top:38px;width:3.7px;height:660px;background:#f7f6f5;"></div>
<div class="r" style="left:1204.2px;top:38px;width:0.8px;height:660px;background:#d8d6d4;"></div>
<div class="r" style="left:1203.3px;top:0px;width:1px;height:38px;background:#250000;"></div>
<div class="r" style="left:1200px;top:346px;width:3px;height:262px;background:#bdbbb9;"></div>
<div class="r" style="left:260px;top:284px;width:88.9px;height:36.8px;background:transparent;border:3px solid #e0141e;box-sizing:border-box;"></div>
<div class="r" style="left:98px;top:342px;width:694.8px;height:56.5px;background:transparent;border:3px solid #e0141e;box-sizing:border-box;"></div>
</body></html>
